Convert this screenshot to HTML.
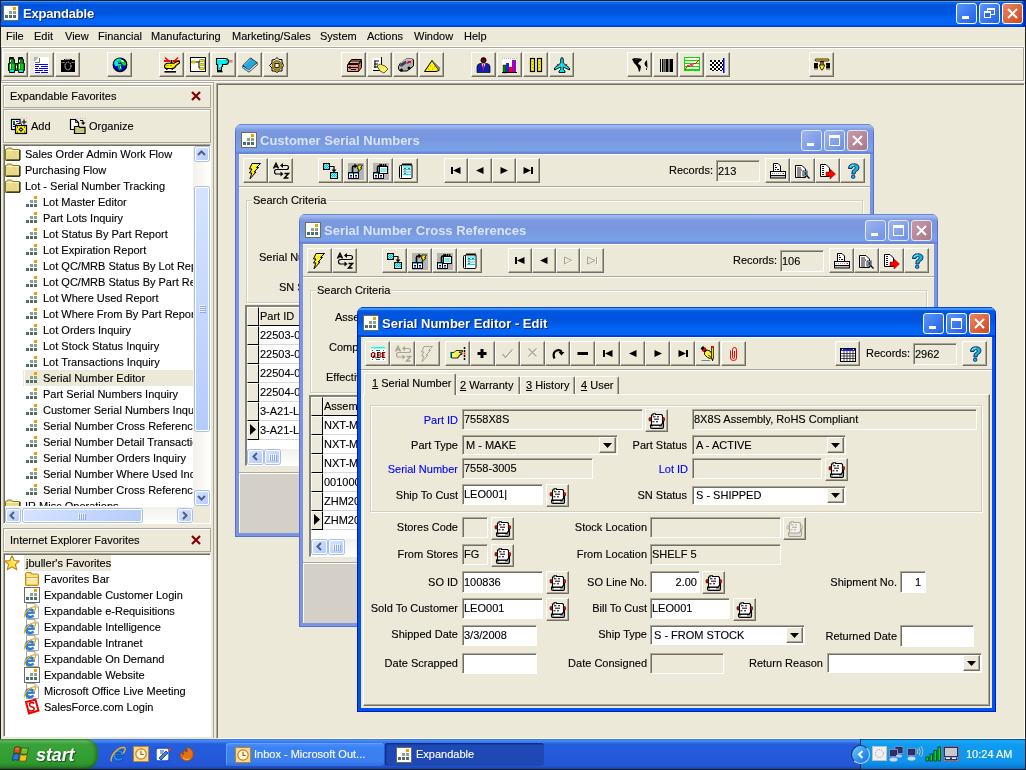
<!DOCTYPE html>
<html><head><meta charset="utf-8"><style>
*{margin:0;padding:0;box-sizing:border-box}
html,body{width:1026px;height:770px;overflow:hidden}
body{position:relative;background:#ECE9D8;will-change:transform;font-family:"Liberation Sans",sans-serif;font-size:11px;color:#000}
.a{position:absolute}
.t{position:absolute;white-space:nowrap;line-height:13px;font-size:11px;-webkit-text-stroke:0.12px currentColor}
.bl{color:#0000FF}
.tb{position:absolute;width:25px;height:25px;background:#ECE9D8;border-top:1px solid #fff;border-left:1px solid #fff;border-right:1px solid #716F64;border-bottom:1px solid #716F64;box-shadow:inset -1px -1px 0 #ACA899}
.tb svg{position:absolute;left:3px;top:3px;width:16px;height:16px}
.fld{position:absolute;background:#ECE9D8;border-top:1px solid #ACA899;border-left:1px solid #ACA899;border-right:1px solid #fff;border-bottom:1px solid #fff;box-shadow:inset 1px 1px 0 #716F64}
.fld.w{background:#fff}
.v{position:absolute;white-space:nowrap;line-height:13px;font-size:11px;-webkit-text-stroke:0.12px currentColor}
.ttl{position:absolute;white-space:nowrap;font-weight:bold;font-size:13px;line-height:16px}
.xb{position:absolute;width:21px;height:21px;border:1px solid #fff;border-radius:3px}
.sb{position:absolute;background:linear-gradient(135deg,#D6E4FF,#B4CBFA);border:1px solid #fff;border-radius:2px;box-shadow:0 0 0 1px #A8C0F0}
svg{overflow:visible}
</style></head><body>
<div class="a" style="left:0;top:0;width:1026px;height:1px;background:#202020"></div>
<div class="a" style="left:0;top:1px;width:1026px;height:26px;background:linear-gradient(to bottom,#3D93FF 0px,#3D93FF 1px,#0A66EE 1px,#0A62EA 3px,#0055DE 3px,#0055DE 13px,#005CE8 14px,#0064F4 18px,#0064F4 24px,#0050E0 24px,#0038CC 26px)"></div>
<div class="a" style="left:1021px;top:1px;width:5px;height:26px;background:linear-gradient(to right,rgba(0,40,190,0),#0030B8 70%,#001C90)"></div>
<svg class="a" style="left:3px;top:5px;width:16px;height:16px" viewBox="0 0 16 16"><rect x="0.5" y="0.5" width="15" height="15" fill="#fff" stroke="#6b6b5e"/><rect x="10" y="2" width="3" height="3" fill="#F0A000"/><rect x="6" y="6" width="3" height="3" fill="#8DA28D"/><rect x="10" y="6" width="3" height="3" fill="#8DA28D"/><rect x="2" y="10" width="3" height="3" fill="#4E6E6E"/><rect x="6" y="10" width="3" height="3" fill="#4E6E6E"/><rect x="10" y="10" width="3" height="3" fill="#4E6E6E"/></svg>
<div class="ttl" style="left:23px;top:6px;color:#fff;text-shadow:1px 1px 0 #0A1E6E;letter-spacing:-0.2px">Expandable</div>
<div class="xb" style="left:956px;top:3px;background:linear-gradient(135deg,#5A95FA,#2060E8);border-color:#fff"><div class="a" style="left:5px;top:12px;width:7px;height:3px;background:#fff"></div></div><div class="xb" style="left:979px;top:3px;background:linear-gradient(135deg,#5A95FA,#2060E8);border-color:#fff"><div class="a" style="left:7px;top:4px;width:8px;height:7px;border:1px solid #fff;border-top-width:2px"></div><div class="a" style="left:4px;top:7px;width:7px;height:7px;border:1px solid #fff;border-top-width:2px;background:#2A68EA"></div></div><div class="xb" style="left:1002px;top:3px;background:linear-gradient(135deg,#EC8660,#CC4820);border-color:#fff"><svg class="a" style="left:4px;top:4px;width:11px;height:11px"><path d="M1 1L10 10M10 1L1 10" stroke="#fff" stroke-width="2"/></svg></div>
<div class="a" style="left:0;top:0;width:1px;height:739px;background:#202020"></div>
<div class="a" style="left:1025px;top:27px;width:1px;height:712px;background:#202020"></div>
<div class="t " style="left:6px;top:30px;">File</div>
<div class="t " style="left:34px;top:30px;">Edit</div>
<div class="t " style="left:65px;top:30px;">View</div>
<div class="t " style="left:98px;top:30px;">Financial</div>
<div class="t " style="left:151px;top:30px;">Manufacturing</div>
<div class="t " style="left:232px;top:30px;">Marketing/Sales</div>
<div class="t " style="left:320px;top:30px;">System</div>
<div class="t " style="left:367px;top:30px;">Actions</div>
<div class="t " style="left:414px;top:30px;">Window</div>
<div class="t " style="left:464px;top:30px;">Help</div>
<div class="a" style="left:1px;top:46px;width:1024px;height:1px;background:#fff"></div>
<div class="a" style="left:1px;top:47px;width:1023px;height:34px;border:1px solid #ACA899;box-shadow:inset 1px 1px 0 #fff,1px 1px 0 #fff"></div>
<div class="tb" style="left:3px;top:52px;width:25px;height:25px"><svg style="left:4px;top:4px" viewBox="0 0 16 16"><path d="M1.5 0.5h4v2h1v4h1v7h-1v2h-5v-2h-1v-7h1z" fill="#0A8C0A" stroke="#000"/><path d="M10.5 0.5h4v2h1v4h1v7h-1v2h-5v-2h-1v-7h1z" fill="#0A8C0A" stroke="#000"/><rect x="2" y="1" width="3" height="1" fill="#000"/><rect x="11" y="1" width="3" height="1" fill="#000"/><rect x="2" y="3" width="1" height="2" fill="#fff"/><rect x="11" y="3" width="1" height="2" fill="#fff"/><rect x="2" y="7" width="1" height="5" fill="#fff"/><rect x="11" y="7" width="1" height="5" fill="#fff"/><rect x="4" y="7" width="2" height="5" fill="#00E000"/><rect x="13" y="7" width="2" height="5" fill="#00E000"/><rect x="2" y="13" width="4" height="2" fill="#00E8F0"/><rect x="11" y="13" width="4" height="2" fill="#00E8F0"/><path d="M7.5 6.5h2v7h-2z" fill="#00C000" stroke="#000"/><rect x="8" y="9" width="1" height="2" fill="#fff"/></svg></div>
<div class="tb" style="left:29px;top:52px;width:25px;height:25px"><svg style="left:4px;top:4px" viewBox="0 0 16 16"><path d="M0 0h15v16H0z" fill="#fff"/><path d="M0 0 H5 L0 5z" fill="#B0B0BC"/><path d="M5.5 1 V5.5 H1" fill="none" stroke="#707070"/><path d="M1 7.5h13M1 9.5h4M7 9.5h7M1 11.5h3M5 11.5h9M1 13.5h8M10 13.5h4M1 15.5h5M7 15.5h7" stroke="#0000FF" stroke-width="1"/></svg></div>
<div class="tb" style="left:55px;top:52px;width:25px;height:25px"><svg style="left:4px;top:4px" viewBox="0 0 16 16"><rect x="1" y="3" width="14" height="12" fill="#000"/><rect x="4" y="2" width="8" height="1.5" fill="#000"/><rect x="5" y="1.8" width="5" height="1" fill="#A0A0A0"/><ellipse cx="8" cy="9" rx="3" ry="3.8" fill="none" stroke="#E8E8E8" stroke-width="1" stroke-dasharray="1.5 0.7"/><path d="M2.5 5.5h2M11.5 5.5h2M0.5 5.5h1M14.5 5.5h1" stroke="#B0B0B0" stroke-width="0.8"/></svg></div>
<div class="tb" style="left:107px;top:52px;width:25px;height:25px"><svg style="left:4px;top:4px" viewBox="0 0 16 16"><circle cx="8" cy="7.8" r="6.8" fill="#0000E0" stroke="#000" stroke-width="1.2"/><path d="M2 6 Q3 2 7 1.5 L10 2 L8 4 L6 4 L6 7 L9 7 L9 12 L7 13 L6 9 L3 9z" fill="#00E8F0"/><path d="M5 4 L8 3 L11 3 L14 6 L14 8 L12 9 L10 7 L9 5 L7 6z" fill="#00E000"/><path d="M6 8 L9 8 L10 12 L7 13z" fill="#00C000"/><path d="M8 9 L9 10 L8 12z" fill="#fff"/><path d="M9 3h2l1 2h-2z" fill="#fff"/></svg></div>
<div class="tb" style="left:159px;top:52px;width:25px;height:25px"><svg style="left:4px;top:4px" viewBox="0 0 16 16"><path d="M0.8 0.5 L4 3.3 M14.2 0.5 L11 3.3" stroke="#FF0000" stroke-width="1.4"/><rect x="0" y="3" width="6" height="2" fill="#FF0000"/><rect x="9" y="3" width="6" height="2" fill="#FF0000"/><rect x="6.5" y="3" width="2" height="3" fill="#000"/><path d="M0.5 9.5 Q0.5 6.5 4 6.2 H10 Q11 5.5 12 5 L15.5 4 V6 L12 8.5 Q11 11.5 8 11.5 H3 Q0.5 11.5 0.5 9.5z" fill="#FFF000" stroke="#000" stroke-width="1.1"/><path d="M2.5 8.5h2M6 8.5h2" stroke="#909000" stroke-width="1"/><rect x="2" y="11.5" width="1.5" height="2" fill="#000"/><rect x="7.5" y="11.5" width="1.5" height="2" fill="#000"/><rect x="0" y="13" width="12" height="1" fill="#fff"/><rect x="0.5" y="14" width="11.5" height="1.6" fill="#000"/></svg></div>
<div class="tb" style="left:185px;top:52px;width:25px;height:25px"><svg style="left:4px;top:4px" viewBox="0 0 16 16"><rect x="0.5" y="0.5" width="15" height="14" fill="#fff" stroke="#000"/><path d="M1 0.5h14M1 14.5h14" stroke="#000"/><path d="M6 5h3M9 5 L10 3.5M9 5v6h1" fill="none" stroke="#000"/><path d="M9.5 3h5v9h-5" fill="none" stroke="#8890A0"/><rect x="1" y="4" width="5" height="2" rx="1" fill="#F0E000" stroke="#707000" stroke-width="0.5"/><rect x="9.5" y="2.5" width="5" height="2" rx="1" fill="#F0E000" stroke="#707000" stroke-width="0.5"/><rect x="9.5" y="6.5" width="5" height="2" rx="1" fill="#F0E000" stroke="#707000" stroke-width="0.5"/><rect x="9.5" y="10.5" width="5" height="2" rx="1" fill="#F0E000" stroke="#707000" stroke-width="0.5"/></svg></div>
<div class="tb" style="left:211px;top:52px;width:25px;height:25px"><svg style="left:4px;top:4px" viewBox="0 0 16 16"><path d="M0.5 1.5 H9.5 Q12.5 1.5 12.5 4.5 Q12.5 7.5 9.5 7.5 H6.5 V9.5 H5.5 V13.5 H1.5 V7.5 H0.5z" fill="#00F0F0" stroke="#000" stroke-width="1.1"/><path d="M1.5 2.5h8" stroke="#A0FFFF"/><rect x="3" y="8.3" width="2.5" height="1.5" fill="#fff"/><path d="M10 3 l1 1 M3 11 l1 1" stroke="#00A0A0" stroke-width="0.8"/><path d="M12.5 4 h4" stroke="#FF0000" stroke-width="1"/><path d="M12.5 5.2 h4" stroke="#A0A0A0" stroke-width="0.8"/><rect x="1" y="14" width="5.5" height="1.3" fill="#000"/></svg></div>
<div class="tb" style="left:237px;top:52px;width:25px;height:25px"><svg style="left:4px;top:4px" viewBox="0 0 16 16"><path d="M0.5 8.5 L8.5 0.5 L15.5 5.5 L15.5 8 L7 15.5 L0.5 11z" fill="#000"/><path d="M1.3 8.5 L8.5 1.3 L14.7 5.6 L6.8 13z" fill="#24A8DC"/><path d="M2 8.3 L8.5 2" stroke="#90E0FF" stroke-width="0.8"/><path d="M1 9.5 L6.8 13.3 L15 6.2 V7.8 L7 14.7 L1 10.6z" fill="#fff"/><path d="M1.5 10.3 L7 14 L14.8 7" fill="none" stroke="#A8A8A8" stroke-width="0.6"/><path d="M0.8 11 L6.9 15" stroke="#24A8DC" stroke-width="0.9"/></svg></div>
<div class="tb" style="left:263px;top:52px;width:25px;height:25px"><svg style="left:4px;top:4px" viewBox="0 0 16 16"><path d="M9 0.5 L11 2.5 L14 2.5 L14 5 L15.5 8.5 L14 11 L14 14 L11 14 L9 15.5 L7 14 L4 14 L4 11 L1.5 8.5 L4 6 L4 3 L7 2.5z" fill="none" stroke="#000" stroke-width="1"/><circle cx="9" cy="8.5" r="4.8" fill="#B89A10" stroke="#806000"/><rect x="7" y="6.5" width="4" height="4" fill="#fff" stroke="#000" stroke-width="0.8"/></svg></div>
<div class="tb" style="left:341px;top:52px;width:25px;height:25px"><svg style="left:4px;top:4px" viewBox="0 0 16 16"><path d="M2.5 6.5 L5.5 2.5 H15.5 L12.5 6.5z" fill="#F0A090" stroke="#000"/><path d="M2.5 6.5 L4.5 4 H14.5" fill="none" stroke="#000"/><path d="M1.5 7.5 H12.5 V14.5 H1.5z" fill="#F09080" stroke="#000"/><path d="M12.5 7.5 L15.5 3.5 V10.5 L12.5 14.5" fill="#C06050" stroke="#000"/><path d="M2 10.5h10M4 9v3M5 12.5h5" stroke="#000"/></svg></div>
<div class="tb" style="left:367px;top:52px;width:25px;height:25px"><svg style="left:4px;top:4px" viewBox="0 0 16 16"><rect x="0" y="1" width="10" height="13" fill="#fff"/><path d="M2 4h5M2 7h4M2 10h4M3 4v7M1 13.5h8" stroke="#000" stroke-width="1"/><path d="M9.5 0v12" stroke="#000"/><path d="M5 9 L8 7 L13 9 L16 12 L12 16 L8 14 z" fill="#F8F040" stroke="#000" stroke-width="0.6"/><path d="M9 10l2 2M11 10l2 2M10 13l2 1" stroke="#fff" stroke-width="0.8"/></svg></div>
<div class="tb" style="left:393px;top:52px;width:25px;height:25px"><svg style="left:4px;top:4px" viewBox="0 0 16 16"><path d="M0.5 9.5 L2.5 6 L9 1.5 H14 L15.5 3 V9 L9 14 H2 L0.5 12z" fill="#B0B0B0" stroke="#000"/><path d="M2.5 6 L9 2 L14 2" fill="none" stroke="#E8E8E8"/><path d="M1.5 9 L3.5 6 L8 3.5 L8 6.5 L4 9.5z" fill="#404040"/><rect x="10" y="4" width="3" height="2" fill="#FF0000"/><rect x="8.5" y="5" width="2" height="2" fill="#8040C0"/><circle cx="3.5" cy="13" r="1.5" fill="#000"/><circle cx="11" cy="11" r="1.5" fill="#000"/></svg></div>
<div class="tb" style="left:419px;top:52px;width:25px;height:25px"><svg style="left:4px;top:4px" viewBox="0 0 16 16"><path d="M0.5 14.5 L8 3.5 L12 9.5 L15 13.5 L12 14.5z" fill="#FFF000" stroke="#000"/><path d="M8 3.5 L16 11 L15 13.5z" fill="#909090" stroke="#505050" stroke-width="0.6"/><path d="M6 9h.8M4 12h.8M8 12h.8M10 10h.8" stroke="#707000" stroke-width="0.8"/></svg></div>
<div class="tb" style="left:471px;top:52px;width:25px;height:25px"><svg style="left:4px;top:4px" viewBox="0 0 16 16"><circle cx="7.5" cy="3.2" r="2.6" fill="#300000" stroke="#000" stroke-width="0.7"/><rect x="6" y="2" width="3" height="3" fill="#800000"/><path d="M1 15.5 V10 Q1 7 4 6.5 H11 Q14 7 14 10 V15.5z" fill="#1020B0" stroke="#000" stroke-width="0.7"/><path d="M5.5 6.5 L7.5 12 L9.5 6.5z" fill="#fff"/><path d="M7.5 7v6" stroke="#E00060" stroke-width="1.3"/></svg></div>
<div class="tb" style="left:497px;top:52px;width:25px;height:25px"><svg style="left:4px;top:4px" viewBox="0 0 16 16"><rect x="0" y="1" width="15" height="15" fill="#fff"/><path d="M0 1.5h15" stroke="#B0B0B0" stroke-dasharray="1 1"/><rect x="1" y="8" width="3" height="8" fill="#008000" stroke="#000" stroke-width="0.4"/><rect x="4" y="6" width="3" height="10" fill="#2020F0"/><rect x="7" y="10" width="3" height="6" fill="#FF0000"/><rect x="10" y="3" width="4" height="13" fill="#A000C0"/><path d="M0 15.5h15" stroke="#000"/></svg></div>
<div class="tb" style="left:523px;top:52px;width:25px;height:25px"><svg style="left:4px;top:4px" viewBox="0 0 16 16"><rect x="2.5" y="1.5" width="4" height="13" fill="#FFF000" stroke="#000" stroke-width="1.2"/><rect x="9.5" y="1.5" width="4" height="13" fill="#FFF000" stroke="#000" stroke-width="1.2"/><path d="M4.5 4v.8M4.5 7v.8M4.5 10v.8M11.5 4v.8M11.5 7v.8M11.5 10v.8" stroke="#A0A000"/></svg></div>
<div class="tb" style="left:549px;top:52px;width:25px;height:25px"><svg style="left:4px;top:4px" viewBox="0 0 16 16"><path d="M8 0.5 Q9.3 0.5 9.3 3 V6 L15.5 11 V13 L9.3 10 V12.5 L11 14 V15.5 H5 V14 L6.7 12.5 V10 L0.5 13 V11 L6.7 6 V3 Q6.7 0.5 8 0.5z" fill="#00E8F0" stroke="#000" stroke-width="0.9"/><path d="M3 7.5 L4.5 8.5 M13 7.5 L11.5 8.5" stroke="#E00000" stroke-width="1.6"/></svg></div>
<div class="tb" style="left:627px;top:52px;width:25px;height:25px"><svg style="left:4px;top:4px" viewBox="0 0 16 16"><path d="M0 2 L3 1 L8 1.5 L10 2 L9 4 L7 5 L6 7 L8 8 L9 10 L8 14 L7 15 L6 11 L4 8 L2 6 L1 4z" fill="#000"/><path d="M3 1 L5 2 L4 3z" fill="#606060"/><path d="M13 5 L15 3 L15.5 11 L13.5 9 L12.5 7z" fill="#000"/><path d="M14 11h1v2h-1z" fill="#203060"/></svg></div>
<div class="tb" style="left:653px;top:52px;width:25px;height:25px"><svg style="left:4px;top:4px" viewBox="0 0 16 16"><path d="M2.5 2v13M4.5 2v13M7 2v13M11 2v13" stroke="#000" stroke-width="1"/><rect x="8" y="2" width="2" height="13" fill="#000"/><rect x="12" y="2" width="3" height="13" fill="#000"/><rect x="5.5" y="2" width="0.8" height="13" fill="#000"/></svg></div>
<div class="tb" style="left:679px;top:52px;width:25px;height:25px"><svg style="left:4px;top:4px" viewBox="0 0 16 16"><rect x="0.5" y="0.5" width="15" height="13" fill="#FFF8F0" stroke="#00E000"/><path d="M1 3.5h14M1 6.5h14M1 9.5h14M1 12.5h14" stroke="#00E000"/><path d="M1 13 L4 8 L5 10 L7 7 L8 9 L10 6 L11 7 L15 3" fill="none" stroke="#FF0000" stroke-width="1"/></svg></div>
<div class="tb" style="left:705px;top:52px;width:25px;height:25px"><svg style="left:4px;top:4px" viewBox="0 0 16 16"><rect x="0" y="3" width="13" height="11" fill="#fff"/><path d="M0 3h2v2H0zM4 3h2v2H4zM8 3h2v2H8zM12 3h1v2h-1zM2 5h2v2H2zM6 5h2v2H6zM10 5h2v2h-2zM0 7h2v2H0zM4 7h2v2H4zM8 7h2v2H8zM12 7h1v2h-1zM2 9h2v2H2zM6 9h2v2H6zM10 9h2v2h-2zM0 11h2v2H0zM4 11h2v2H4zM8 11h2v2H8zM12 11h1v2h-1zM2 13h2v1H2zM6 13h2v1H6zM10 13h2v1h-2z" fill="#000"/><rect x="13" y="1" width="1.5" height="15" fill="#0000FF"/></svg></div>
<div class="tb" style="left:809px;top:52px;width:25px;height:25px"><svg style="left:4px;top:4px" viewBox="0 0 16 16"><rect x="1" y="2" width="14" height="2" rx="1" fill="#FFF000" stroke="#000" stroke-width="0.8"/><path d="M6 4 L7 6 H9 L10 4" fill="#000"/><path d="M6.5 5.5 Q8 4.5 9.5 5.5 V8 H6.5z" fill="#fff" stroke="#000" stroke-width="0.7"/><rect x="7" y="5.5" width="2" height="1.3" fill="#FF0000"/><rect x="0" y="6" width="4" height="5.5" fill="#000"/><rect x="12" y="6" width="4" height="5.5" fill="#000"/><path d="M4 7h2M10 7h2M4 10h2M10 10h2" stroke="#fff" stroke-width="0.8"/><path d="M5 8 H11 L8.5 13 H7.5z" fill="#FFF000" stroke="#000" stroke-width="0.8"/><circle cx="4.3" cy="8.5" r="0.8" fill="#FFF000"/><circle cx="11.7" cy="8.5" r="0.8" fill="#FFF000"/><rect x="0" y="12" width="4" height="1" fill="#A0A0A0"/><rect x="12" y="12" width="4" height="1" fill="#A0A0A0"/></svg></div>
<div class="a" style="left:1px;top:82px;width:213px;height:1px;background:#ACA899"></div>
<div class="a" style="left:1px;top:83px;width:213px;height:1px;background:#fff"></div>
<div class="a" style="left:213px;top:83px;width:1px;height:655px;background:#ACA899"></div>
<div class="a" style="left:3px;top:85px;width:208px;height:23px;border:1px solid #ACA899;box-shadow:inset 1px 1px 0 #fff"></div>
<div class="t " style="left:10px;top:90px;">Expandable Favorites</div>
<svg class="a" style="left:191px;top:91px;width:10px;height:10px" viewBox="0 0 10 10"><path d="M1 1 L9 9 M9 1 L1 9" stroke="#800000" stroke-width="2.2"/></svg>
<div class="a" style="left:3px;top:109px;width:208px;height:34px;border:1px solid #ACA899;box-shadow:inset 1px 1px 0 #fff"></div>
<svg class="a" style="left:11px;top:118px;width:16px;height:16px" viewBox="0 0 16 16"><path d="M0 0.3h16" stroke="#B8A0B8" stroke-dasharray="1 1.5" stroke-width="0.7"/><rect x="0.5" y="1.5" width="8.5" height="10" fill="#fff" stroke="#000" stroke-width="1.2"/><rect x="2" y="3" width="2" height="3" fill="#008000"/><path d="M5 3.5h2.5M2 6.5h2.5M2 8.5h2.5" stroke="#0000FF" stroke-width="1"/><path d="M13 1.5v5M10.5 4h5" stroke="#000" stroke-width="1.1"/><path d="M5.5 6.5 Q5.5 5.5 6.5 5.5 H9.5 Q10.5 5.5 10.5 6.5 V7" fill="#fff" stroke="#000" stroke-width="1"/><rect x="4.5" y="7.5" width="11" height="8" fill="#F8F000" stroke="#000" stroke-width="1.2"/><path d="M10 9 L12.5 11.5 L10 14 L7.5 11.5z" fill="#000080"/><circle cx="10" cy="11.5" r="0.8" fill="#fff"/><path d="M6 9h1M13 9h1M6 14h1M13 14h1" stroke="#000080"/></svg>
<div class="t " style="left:31px;top:120px;">Add</div>
<svg class="a" style="left:70px;top:118px;width:16px;height:16px" viewBox="0 0 16 16"><path d="M0 0.3h16" stroke="#B8A0B8" stroke-dasharray="1 1.5" stroke-width="0.7"/><path d="M0.5 1.5 H5.5 L8.5 4.5 V11.5 H0.5z" fill="#fff" stroke="#000" stroke-width="1.2"/><path d="M5.5 1.5 V4.5 H8.5" fill="none" stroke="#000" stroke-width="0.8"/><path d="M10 2.5 H13 V5" fill="none" stroke="#000" stroke-width="1"/><path d="M11 4.5 H15.5 L13.2 7z" fill="#000"/><path d="M4.5 8.5 H9 L9.8 9.3 H15 V15.5 H4.5z" fill="#C8C480" stroke="#000" stroke-width="1.2"/></svg>
<div class="t " style="left:89px;top:120px;">Organize</div>
<div class="a" style="left:3px;top:144px;width:208px;height:380px;background:#fff;border-top:1px solid #ACA899;border-left:1px solid #ACA899;border-right:1px solid #fff;border-bottom:1px solid #fff;box-shadow:inset 1px 1px 0 #716F64"></div>
<div class="a" style="left:5px;top:146px;width:188px;height:360px;overflow:hidden">
<svg class="a" style="left:0px;top:1px;width:16px;height:16px" viewBox="0 0 16 16"><path d="M1.5 2.5 L2.5 1 H6.5 L7.5 2.5 H14.5 V13.5 H0.5 V2.5z" fill="#E8DC88" stroke="#8A7A20" stroke-width="1"/><path d="M1 3.5 H14" stroke="#F8F0C0"/><path d="M1.5 13 H15 V3" fill="none" stroke="#000" stroke-width="1"/><path d="M3 11 L6 8 M7 11 L11 7 M9 6 l2 -1" stroke="#F0B080" stroke-width="0.8" stroke-dasharray="1 1"/></svg>
<div class="t " style="left:20px;top:2px;">Sales Order Admin Work Flow</div>
<svg class="a" style="left:0px;top:17px;width:16px;height:16px" viewBox="0 0 16 16"><path d="M1.5 2.5 L2.5 1 H6.5 L7.5 2.5 H14.5 V13.5 H0.5 V2.5z" fill="#E8DC88" stroke="#8A7A20" stroke-width="1"/><path d="M1 3.5 H14" stroke="#F8F0C0"/><path d="M1.5 13 H15 V3" fill="none" stroke="#000" stroke-width="1"/><path d="M3 11 L6 8 M7 11 L11 7 M9 6 l2 -1" stroke="#F0B080" stroke-width="0.8" stroke-dasharray="1 1"/></svg>
<div class="t " style="left:20px;top:18px;">Purchasing Flow</div>
<svg class="a" style="left:0px;top:33px;width:16px;height:16px" viewBox="0 0 16 16"><path d="M1.5 2.5 L2.5 1 H6.5 L7.5 2.5 H14.5 V13.5 H0.5 V2.5z" fill="#E8DC88" stroke="#8A7A20" stroke-width="1"/><path d="M1 3.5 H14" stroke="#F8F0C0"/><path d="M1.5 13 H15 V3" fill="none" stroke="#000" stroke-width="1"/><path d="M3 11 L6 8 M7 11 L11 7 M9 6 l2 -1" stroke="#F0B080" stroke-width="0.8" stroke-dasharray="1 1"/></svg>
<div class="t " style="left:20px;top:34px;">Lot - Serial Number Tracking</div>
<svg class="a" style="left:19px;top:49px;width:16px;height:16px" viewBox="0 0 16 16"><rect x="10" y="1" width="3" height="3" fill="#F0A000"/><rect x="6" y="5" width="3" height="3" fill="#8DA28D"/><rect x="10" y="5" width="3" height="3" fill="#8DA28D"/><rect x="2" y="9" width="3" height="3" fill="#4E6E6E"/><rect x="6" y="9" width="3" height="3" fill="#4E6E6E"/><rect x="10" y="9" width="3" height="3" fill="#4E6E6E"/></svg>
<div class="t " style="left:38px;top:50px;">Lot Master Editor</div>
<svg class="a" style="left:19px;top:65px;width:16px;height:16px" viewBox="0 0 16 16"><rect x="10" y="1" width="3" height="3" fill="#F0A000"/><rect x="6" y="5" width="3" height="3" fill="#8DA28D"/><rect x="10" y="5" width="3" height="3" fill="#8DA28D"/><rect x="2" y="9" width="3" height="3" fill="#4E6E6E"/><rect x="6" y="9" width="3" height="3" fill="#4E6E6E"/><rect x="10" y="9" width="3" height="3" fill="#4E6E6E"/></svg>
<div class="t " style="left:38px;top:66px;">Part Lots Inquiry</div>
<svg class="a" style="left:19px;top:81px;width:16px;height:16px" viewBox="0 0 16 16"><rect x="10" y="1" width="3" height="3" fill="#F0A000"/><rect x="6" y="5" width="3" height="3" fill="#8DA28D"/><rect x="10" y="5" width="3" height="3" fill="#8DA28D"/><rect x="2" y="9" width="3" height="3" fill="#4E6E6E"/><rect x="6" y="9" width="3" height="3" fill="#4E6E6E"/><rect x="10" y="9" width="3" height="3" fill="#4E6E6E"/></svg>
<div class="t " style="left:38px;top:82px;">Lot Status By Part Report</div>
<svg class="a" style="left:19px;top:97px;width:16px;height:16px" viewBox="0 0 16 16"><rect x="10" y="1" width="3" height="3" fill="#F0A000"/><rect x="6" y="5" width="3" height="3" fill="#8DA28D"/><rect x="10" y="5" width="3" height="3" fill="#8DA28D"/><rect x="2" y="9" width="3" height="3" fill="#4E6E6E"/><rect x="6" y="9" width="3" height="3" fill="#4E6E6E"/><rect x="10" y="9" width="3" height="3" fill="#4E6E6E"/></svg>
<div class="t " style="left:38px;top:98px;">Lot Expiration Report</div>
<svg class="a" style="left:19px;top:113px;width:16px;height:16px" viewBox="0 0 16 16"><rect x="10" y="1" width="3" height="3" fill="#F0A000"/><rect x="6" y="5" width="3" height="3" fill="#8DA28D"/><rect x="10" y="5" width="3" height="3" fill="#8DA28D"/><rect x="2" y="9" width="3" height="3" fill="#4E6E6E"/><rect x="6" y="9" width="3" height="3" fill="#4E6E6E"/><rect x="10" y="9" width="3" height="3" fill="#4E6E6E"/></svg>
<div class="t " style="left:38px;top:114px;">Lot QC/MRB Status By Lot Report</div>
<svg class="a" style="left:19px;top:129px;width:16px;height:16px" viewBox="0 0 16 16"><rect x="10" y="1" width="3" height="3" fill="#F0A000"/><rect x="6" y="5" width="3" height="3" fill="#8DA28D"/><rect x="10" y="5" width="3" height="3" fill="#8DA28D"/><rect x="2" y="9" width="3" height="3" fill="#4E6E6E"/><rect x="6" y="9" width="3" height="3" fill="#4E6E6E"/><rect x="10" y="9" width="3" height="3" fill="#4E6E6E"/></svg>
<div class="t " style="left:38px;top:130px;">Lot QC/MRB Status By Part Report</div>
<svg class="a" style="left:19px;top:145px;width:16px;height:16px" viewBox="0 0 16 16"><rect x="10" y="1" width="3" height="3" fill="#F0A000"/><rect x="6" y="5" width="3" height="3" fill="#8DA28D"/><rect x="10" y="5" width="3" height="3" fill="#8DA28D"/><rect x="2" y="9" width="3" height="3" fill="#4E6E6E"/><rect x="6" y="9" width="3" height="3" fill="#4E6E6E"/><rect x="10" y="9" width="3" height="3" fill="#4E6E6E"/></svg>
<div class="t " style="left:38px;top:146px;">Lot Where Used Report</div>
<svg class="a" style="left:19px;top:161px;width:16px;height:16px" viewBox="0 0 16 16"><rect x="10" y="1" width="3" height="3" fill="#F0A000"/><rect x="6" y="5" width="3" height="3" fill="#8DA28D"/><rect x="10" y="5" width="3" height="3" fill="#8DA28D"/><rect x="2" y="9" width="3" height="3" fill="#4E6E6E"/><rect x="6" y="9" width="3" height="3" fill="#4E6E6E"/><rect x="10" y="9" width="3" height="3" fill="#4E6E6E"/></svg>
<div class="t " style="left:38px;top:162px;">Lot Where From By Part Report</div>
<svg class="a" style="left:19px;top:177px;width:16px;height:16px" viewBox="0 0 16 16"><rect x="10" y="1" width="3" height="3" fill="#F0A000"/><rect x="6" y="5" width="3" height="3" fill="#8DA28D"/><rect x="10" y="5" width="3" height="3" fill="#8DA28D"/><rect x="2" y="9" width="3" height="3" fill="#4E6E6E"/><rect x="6" y="9" width="3" height="3" fill="#4E6E6E"/><rect x="10" y="9" width="3" height="3" fill="#4E6E6E"/></svg>
<div class="t " style="left:38px;top:178px;">Lot Orders Inquiry</div>
<svg class="a" style="left:19px;top:193px;width:16px;height:16px" viewBox="0 0 16 16"><rect x="10" y="1" width="3" height="3" fill="#F0A000"/><rect x="6" y="5" width="3" height="3" fill="#8DA28D"/><rect x="10" y="5" width="3" height="3" fill="#8DA28D"/><rect x="2" y="9" width="3" height="3" fill="#4E6E6E"/><rect x="6" y="9" width="3" height="3" fill="#4E6E6E"/><rect x="10" y="9" width="3" height="3" fill="#4E6E6E"/></svg>
<div class="t " style="left:38px;top:194px;">Lot Stock Status Inquiry</div>
<svg class="a" style="left:19px;top:209px;width:16px;height:16px" viewBox="0 0 16 16"><rect x="10" y="1" width="3" height="3" fill="#F0A000"/><rect x="6" y="5" width="3" height="3" fill="#8DA28D"/><rect x="10" y="5" width="3" height="3" fill="#8DA28D"/><rect x="2" y="9" width="3" height="3" fill="#4E6E6E"/><rect x="6" y="9" width="3" height="3" fill="#4E6E6E"/><rect x="10" y="9" width="3" height="3" fill="#4E6E6E"/></svg>
<div class="t " style="left:38px;top:210px;">Lot Transactions Inquiry</div>
<div class="a" style="left:18px;top:224px;width:170px;height:16px;background:#ECE9D8"></div>
<div class="a" style="left:19px;top:224px;width:1px;height:16px;background:#fff"></div>
<svg class="a" style="left:19px;top:225px;width:16px;height:16px" viewBox="0 0 16 16"><rect x="10" y="1" width="3" height="3" fill="#F0A000"/><rect x="6" y="5" width="3" height="3" fill="#8DA28D"/><rect x="10" y="5" width="3" height="3" fill="#8DA28D"/><rect x="2" y="9" width="3" height="3" fill="#4E6E6E"/><rect x="6" y="9" width="3" height="3" fill="#4E6E6E"/><rect x="10" y="9" width="3" height="3" fill="#4E6E6E"/></svg>
<div class="t " style="left:38px;top:226px;">Serial Number Editor</div>
<svg class="a" style="left:19px;top:241px;width:16px;height:16px" viewBox="0 0 16 16"><rect x="10" y="1" width="3" height="3" fill="#F0A000"/><rect x="6" y="5" width="3" height="3" fill="#8DA28D"/><rect x="10" y="5" width="3" height="3" fill="#8DA28D"/><rect x="2" y="9" width="3" height="3" fill="#4E6E6E"/><rect x="6" y="9" width="3" height="3" fill="#4E6E6E"/><rect x="10" y="9" width="3" height="3" fill="#4E6E6E"/></svg>
<div class="t " style="left:38px;top:242px;">Part Serial Numbers Inquiry</div>
<svg class="a" style="left:19px;top:257px;width:16px;height:16px" viewBox="0 0 16 16"><rect x="10" y="1" width="3" height="3" fill="#F0A000"/><rect x="6" y="5" width="3" height="3" fill="#8DA28D"/><rect x="10" y="5" width="3" height="3" fill="#8DA28D"/><rect x="2" y="9" width="3" height="3" fill="#4E6E6E"/><rect x="6" y="9" width="3" height="3" fill="#4E6E6E"/><rect x="10" y="9" width="3" height="3" fill="#4E6E6E"/></svg>
<div class="t " style="left:38px;top:258px;">Customer Serial Numbers Inquiry</div>
<svg class="a" style="left:19px;top:273px;width:16px;height:16px" viewBox="0 0 16 16"><rect x="10" y="1" width="3" height="3" fill="#F0A000"/><rect x="6" y="5" width="3" height="3" fill="#8DA28D"/><rect x="10" y="5" width="3" height="3" fill="#8DA28D"/><rect x="2" y="9" width="3" height="3" fill="#4E6E6E"/><rect x="6" y="9" width="3" height="3" fill="#4E6E6E"/><rect x="10" y="9" width="3" height="3" fill="#4E6E6E"/></svg>
<div class="t " style="left:38px;top:274px;">Serial Number Cross Reference</div>
<svg class="a" style="left:19px;top:289px;width:16px;height:16px" viewBox="0 0 16 16"><rect x="10" y="1" width="3" height="3" fill="#F0A000"/><rect x="6" y="5" width="3" height="3" fill="#8DA28D"/><rect x="10" y="5" width="3" height="3" fill="#8DA28D"/><rect x="2" y="9" width="3" height="3" fill="#4E6E6E"/><rect x="6" y="9" width="3" height="3" fill="#4E6E6E"/><rect x="10" y="9" width="3" height="3" fill="#4E6E6E"/></svg>
<div class="t " style="left:38px;top:290px;">Serial Number Detail Transaction</div>
<svg class="a" style="left:19px;top:305px;width:16px;height:16px" viewBox="0 0 16 16"><rect x="10" y="1" width="3" height="3" fill="#F0A000"/><rect x="6" y="5" width="3" height="3" fill="#8DA28D"/><rect x="10" y="5" width="3" height="3" fill="#8DA28D"/><rect x="2" y="9" width="3" height="3" fill="#4E6E6E"/><rect x="6" y="9" width="3" height="3" fill="#4E6E6E"/><rect x="10" y="9" width="3" height="3" fill="#4E6E6E"/></svg>
<div class="t " style="left:38px;top:306px;">Serial Number Orders Inquiry</div>
<svg class="a" style="left:19px;top:321px;width:16px;height:16px" viewBox="0 0 16 16"><rect x="10" y="1" width="3" height="3" fill="#F0A000"/><rect x="6" y="5" width="3" height="3" fill="#8DA28D"/><rect x="10" y="5" width="3" height="3" fill="#8DA28D"/><rect x="2" y="9" width="3" height="3" fill="#4E6E6E"/><rect x="6" y="9" width="3" height="3" fill="#4E6E6E"/><rect x="10" y="9" width="3" height="3" fill="#4E6E6E"/></svg>
<div class="t " style="left:38px;top:322px;">Serial Number Where Used Inquiry</div>
<svg class="a" style="left:19px;top:337px;width:16px;height:16px" viewBox="0 0 16 16"><rect x="10" y="1" width="3" height="3" fill="#F0A000"/><rect x="6" y="5" width="3" height="3" fill="#8DA28D"/><rect x="10" y="5" width="3" height="3" fill="#8DA28D"/><rect x="2" y="9" width="3" height="3" fill="#4E6E6E"/><rect x="6" y="9" width="3" height="3" fill="#4E6E6E"/><rect x="10" y="9" width="3" height="3" fill="#4E6E6E"/></svg>
<div class="t " style="left:38px;top:338px;">Serial Number Cross Reference</div>
<svg class="a" style="left:0px;top:353px;width:16px;height:16px" viewBox="0 0 16 16"><path d="M1.5 2.5 L2.5 1 H6.5 L7.5 2.5 H14.5 V13.5 H0.5 V2.5z" fill="#E8DC88" stroke="#8A7A20" stroke-width="1"/><path d="M1 3.5 H14" stroke="#F8F0C0"/><path d="M1.5 13 H15 V3" fill="none" stroke="#000" stroke-width="1"/><path d="M3 11 L6 8 M7 11 L11 7 M9 6 l2 -1" stroke="#F0B080" stroke-width="0.8" stroke-dasharray="1 1"/></svg>
<div class="t " style="left:20px;top:354px;">IR Misc Operations</div>
</div>
<div class="a" style="left:193px;top:146px;width:17px;height:360px;background:linear-gradient(to right,#F3F1EC,#FEFEFB)"></div>
<div class="sb" style="left:195px;top:147px;width:14px;height:14px"><svg class="a" style="left:1px;top:1px;width:9px;height:9px" viewBox="0 0 9 9"><path d="M1 6 L4.5 2.5 L8 6" fill="none" stroke="#4D6185" stroke-width="2"/></svg></div>
<div class="sb" style="left:195px;top:491px;width:14px;height:14px"><svg class="a" style="left:1px;top:1px;width:9px;height:9px" viewBox="0 0 9 9"><path d="M1 3 L4.5 6.5 L8 3" fill="none" stroke="#4D6185" stroke-width="2"/></svg></div>
<div class="sb" style="left:195px;top:187px;width:14px;height:244px"><svg class="a" style="left:2px;top:117px;width:8px;height:8px"><path d="M1 0.5h6M1 2.5h6M1 4.5h6M1 6.5h6" stroke="#EEF4FF"/><path d="M2 1.5h6M2 3.5h6M2 5.5h6M2 7.5h6" stroke="#8CA8E8"/></svg></div>
<div class="a" style="left:5px;top:507px;width:188px;height:16px;background:linear-gradient(to bottom,#F3F1EC,#FEFEFB)"></div>
<div class="sb" style="left:6px;top:509px;width:14px;height:13px"><svg class="a" style="left:1px;top:1px;width:9px;height:9px" viewBox="0 0 9 9"><path d="M6 1 L2.5 4.5 L6 8" fill="none" stroke="#4D6185" stroke-width="2"/></svg></div>
<div class="sb" style="left:178px;top:509px;width:14px;height:13px"><svg class="a" style="left:1px;top:1px;width:9px;height:9px" viewBox="0 0 9 9"><path d="M3 1 L6.5 4.5 L3 8" fill="none" stroke="#4D6185" stroke-width="2"/></svg></div>
<div class="sb" style="left:23px;top:509px;width:119px;height:13px"><svg class="a" style="left:54px;top:2px;width:8px;height:8px"><path d="M0.5 1v6M2.5 1v6M4.5 1v6M6.5 1v6" stroke="#EEF4FF"/><path d="M1.5 2v6M3.5 2v6M5.5 2v6M7.5 2v6" stroke="#8CA8E8"/></svg></div>
<div class="a" style="left:193px;top:506px;width:17px;height:17px;background:#ECE9D8"></div>
<div class="a" style="left:3px;top:528px;width:208px;height:24px;border:1px solid #ACA899;box-shadow:inset 1px 1px 0 #fff"></div>
<div class="t " style="left:10px;top:534px;">Internet Explorer Favorites</div>
<svg class="a" style="left:191px;top:535px;width:10px;height:10px" viewBox="0 0 10 10"><path d="M1 1 L9 9 M9 1 L1 9" stroke="#800000" stroke-width="2.2"/></svg>
<div class="a" style="left:3px;top:553px;width:208px;height:184px;background:#fff;border-top:1px solid #ACA899;border-left:1px solid #ACA899;border-right:1px solid #fff;border-bottom:1px solid #fff;box-shadow:inset 1px 1px 0 #716F64"></div>
<div class="a" style="left:24px;top:555px;width:87px;height:16px;background:#ECE9D8"></div>
<svg class="a" style="left:4px;top:555px;width:16px;height:16px" viewBox="0 0 16 16"><path d="M8 0.8 L10.2 5.6 L15.3 6 L11.4 9.4 L12.8 14.8 L8 11.9 L3.2 14.8 L4.6 9.4 L0.7 6 L5.8 5.6z" fill="#F8E040" stroke="#C08020" stroke-width="1.1" stroke-linejoin="round"/><path d="M8 3 L9 6.5 L12 7 L9.5 9" fill="none" stroke="#FFF8C0" stroke-width="0.8"/></svg>
<div class="t " style="left:26px;top:557px;">jbuller's Favorites</div>
<svg class="a" style="left:24px;top:571px;width:16px;height:16px" viewBox="0 0 16 16"><path d="M1.5 3.5 Q1.5 1.5 3.5 1.5 H6.5 L8 3 H13 Q14.5 3 14.5 4.5 V12.5 Q14.5 14.5 12.5 14.5 H3 Q1.5 14.5 1.5 13z" fill="#F8E088" stroke="#C08818" stroke-width="1.1"/><path d="M2 6.5 H14 V13 Q14 14 13 14 H3 Q2 14 2 13z" fill="#FCEB9C" stroke="#D09820" stroke-width="0.8"/><path d="M3 7.5 H13" stroke="#fff" stroke-width="0.8"/></svg>
<div class="t " style="left:44px;top:573px;">Favorites Bar</div>
<svg class="a" style="left:24px;top:587px;width:16px;height:16px" viewBox="0 0 16 16"><rect x="0.5" y="0.5" width="15" height="15" fill="#fff" stroke="#6b6b5e"/><rect x="10" y="2" width="3" height="3" fill="#F0A000"/><rect x="6" y="6" width="3" height="3" fill="#8DA28D"/><rect x="10" y="6" width="3" height="3" fill="#8DA28D"/><rect x="2" y="10" width="3" height="3" fill="#4E6E6E"/><rect x="6" y="10" width="3" height="3" fill="#4E6E6E"/><rect x="10" y="10" width="3" height="3" fill="#4E6E6E"/></svg>
<div class="t " style="left:44px;top:589px;">Expandable Customer Login</div>
<svg class="a" style="left:24px;top:603px;width:16px;height:16px" viewBox="0 0 16 16"><path d="M2.5 0.5 H11 L14.5 4 V15.5 H2.5z" fill="#fff" stroke="#A8A8A8"/><path d="M11 0.5 V4 H14.5" fill="#F0F0F0" stroke="#A8A8A8"/><path d="M10.5 10.5 H3.5 Q3.8 13 6.3 13 Q7.8 13 8.8 12 L10 13.3 Q8.6 15 6 15 Q1.2 15 1.2 10.2 Q1.2 5.5 6 5.5 Q10.8 5.5 10.5 10.5z M3.6 9 H8.2 Q8 7.3 5.9 7.3 Q4 7.3 3.6 9z" fill="#1E88E8" stroke="#0A4AA8" stroke-width="0.5"/><path d="M0.8 14.5 Q-0.5 12 3 8 Q7 3.5 11 4 Q12.5 5 9.5 9" fill="none" stroke="#F0B020" stroke-width="1.3"/></svg>
<div class="t " style="left:44px;top:605px;">Expandable e-Requisitions</div>
<svg class="a" style="left:24px;top:619px;width:16px;height:16px" viewBox="0 0 16 16"><path d="M2.5 0.5 H11 L14.5 4 V15.5 H2.5z" fill="#fff" stroke="#A8A8A8"/><path d="M11 0.5 V4 H14.5" fill="#F0F0F0" stroke="#A8A8A8"/><path d="M10.5 10.5 H3.5 Q3.8 13 6.3 13 Q7.8 13 8.8 12 L10 13.3 Q8.6 15 6 15 Q1.2 15 1.2 10.2 Q1.2 5.5 6 5.5 Q10.8 5.5 10.5 10.5z M3.6 9 H8.2 Q8 7.3 5.9 7.3 Q4 7.3 3.6 9z" fill="#1E88E8" stroke="#0A4AA8" stroke-width="0.5"/><path d="M0.8 14.5 Q-0.5 12 3 8 Q7 3.5 11 4 Q12.5 5 9.5 9" fill="none" stroke="#F0B020" stroke-width="1.3"/></svg>
<div class="t " style="left:44px;top:621px;">Expandable Intelligence</div>
<svg class="a" style="left:24px;top:635px;width:16px;height:16px" viewBox="0 0 16 16"><path d="M2.5 0.5 H11 L14.5 4 V15.5 H2.5z" fill="#fff" stroke="#A8A8A8"/><path d="M11 0.5 V4 H14.5" fill="#F0F0F0" stroke="#A8A8A8"/><path d="M10.5 10.5 H3.5 Q3.8 13 6.3 13 Q7.8 13 8.8 12 L10 13.3 Q8.6 15 6 15 Q1.2 15 1.2 10.2 Q1.2 5.5 6 5.5 Q10.8 5.5 10.5 10.5z M3.6 9 H8.2 Q8 7.3 5.9 7.3 Q4 7.3 3.6 9z" fill="#1E88E8" stroke="#0A4AA8" stroke-width="0.5"/><path d="M0.8 14.5 Q-0.5 12 3 8 Q7 3.5 11 4 Q12.5 5 9.5 9" fill="none" stroke="#F0B020" stroke-width="1.3"/></svg>
<div class="t " style="left:44px;top:637px;">Expandable Intranet</div>
<svg class="a" style="left:24px;top:651px;width:16px;height:16px" viewBox="0 0 16 16"><path d="M2.5 0.5 H11 L14.5 4 V15.5 H2.5z" fill="#fff" stroke="#A8A8A8"/><path d="M11 0.5 V4 H14.5" fill="#F0F0F0" stroke="#A8A8A8"/><path d="M10.5 10.5 H3.5 Q3.8 13 6.3 13 Q7.8 13 8.8 12 L10 13.3 Q8.6 15 6 15 Q1.2 15 1.2 10.2 Q1.2 5.5 6 5.5 Q10.8 5.5 10.5 10.5z M3.6 9 H8.2 Q8 7.3 5.9 7.3 Q4 7.3 3.6 9z" fill="#1E88E8" stroke="#0A4AA8" stroke-width="0.5"/><path d="M0.8 14.5 Q-0.5 12 3 8 Q7 3.5 11 4 Q12.5 5 9.5 9" fill="none" stroke="#F0B020" stroke-width="1.3"/></svg>
<div class="t " style="left:44px;top:653px;">Expandable On Demand</div>
<svg class="a" style="left:24px;top:667px;width:16px;height:16px" viewBox="0 0 16 16"><rect x="0.5" y="0.5" width="15" height="15" fill="#fff" stroke="#6b6b5e"/><rect x="10" y="2" width="3" height="3" fill="#F0A000"/><rect x="6" y="6" width="3" height="3" fill="#8DA28D"/><rect x="10" y="6" width="3" height="3" fill="#8DA28D"/><rect x="2" y="10" width="3" height="3" fill="#4E6E6E"/><rect x="6" y="10" width="3" height="3" fill="#4E6E6E"/><rect x="10" y="10" width="3" height="3" fill="#4E6E6E"/></svg>
<div class="t " style="left:44px;top:669px;">Expandable Website</div>
<svg class="a" style="left:24px;top:683px;width:16px;height:16px" viewBox="0 0 16 16"><path d="M2.5 0.5 H11 L14.5 4 V15.5 H2.5z" fill="#fff" stroke="#A8A8A8"/><path d="M11 0.5 V4 H14.5" fill="#F0F0F0" stroke="#A8A8A8"/><path d="M10.5 10.5 H3.5 Q3.8 13 6.3 13 Q7.8 13 8.8 12 L10 13.3 Q8.6 15 6 15 Q1.2 15 1.2 10.2 Q1.2 5.5 6 5.5 Q10.8 5.5 10.5 10.5z M3.6 9 H8.2 Q8 7.3 5.9 7.3 Q4 7.3 3.6 9z" fill="#1E88E8" stroke="#0A4AA8" stroke-width="0.5"/><path d="M0.8 14.5 Q-0.5 12 3 8 Q7 3.5 11 4 Q12.5 5 9.5 9" fill="none" stroke="#F0B020" stroke-width="1.3"/></svg>
<div class="t " style="left:44px;top:685px;">Microsoft Office Live Meeting</div>
<svg class="a" style="left:24px;top:699px;width:16px;height:16px" viewBox="0 0 16 16"><path d="M2 3 L11.5 0.8 L14.5 11.5 L5 14.5z" fill="#fff" stroke="#F00000" stroke-width="2"/><path d="M10 4.5 Q9 3.2 7 3.8 Q5 4.5 5.8 6.5 Q6.5 8 8.5 8 Q10.5 8.5 10 10.5 Q9.3 12 7 12 Q5.5 11.8 5 10.8" fill="none" stroke="#E00000" stroke-width="1.6"/></svg>
<div class="t " style="left:44px;top:701px;">SalesForce.com Login</div>
<div class="a" style="left:216px;top:83px;width:809px;height:656px;border-top:1px solid #ACA899;border-left:1px solid #ACA899;border-right:1px solid #fff;border-bottom:1px solid #fff;box-shadow:inset 1px 1px 0 #716F64"></div>
<div class="a" style="left:235px;top:124px;width:639px;height:413px;border-radius:7px 7px 0 0;background:#7A96E2;box-shadow:inset 0 -1px 0 #5A6ED8,inset 1px 0 0 #5A6ED8,inset -1px 0 0 #5A6ED8"></div><div class="a" style="left:235px;top:124px;width:639px;height:30px;border-radius:7px 7px 0 0;background:linear-gradient(to bottom,#6A86DC 0px,#6A86DC 1px,#A3BDEE 1px,#9AB4EA 3px,#7D9AE0 6px,#7896DF 15px,#7A9FE5 22px,#7AA2E8 27px,#6C88DA 28px,#6A84D8 30px)"></div><div class="a" style="left:235px;top:131px;width:1px;height:406px;background:#5A6ED8"></div><div class="a" style="left:873px;top:131px;width:1px;height:406px;background:#5A6ED8"></div><div class="a" style="left:235px;top:536px;width:639px;height:1px;background:#5A6ED8"></div><svg class="a" style="left:241px;top:132px;width:16px;height:16px" viewBox="0 0 16 16"><rect x="0.5" y="0.5" width="15" height="15" fill="#fff" stroke="#6b6b5e"/><rect x="10" y="2" width="3" height="3" fill="#F0A000"/><rect x="6" y="6" width="3" height="3" fill="#8DA28D"/><rect x="10" y="6" width="3" height="3" fill="#8DA28D"/><rect x="2" y="10" width="3" height="3" fill="#4E6E6E"/><rect x="6" y="10" width="3" height="3" fill="#4E6E6E"/><rect x="10" y="10" width="3" height="3" fill="#4E6E6E"/></svg><div class="ttl" style="left:260px;top:133px;color:#D8E4F8;">Customer Serial Numbers</div><div class="xb" style="left:801px;top:130px;background:linear-gradient(135deg,#9CB4F0,#6F90E6);border-color:#E0E8FA"><div class="a" style="left:5px;top:12px;width:7px;height:3px;background:#fff"></div></div><div class="xb" style="left:824px;top:130px;background:linear-gradient(135deg,#9CB4F0,#6F90E6);border-color:#E0E8FA"><div class="a" style="left:4px;top:4px;width:11px;height:11px;border:1px solid #fff;border-top-width:3px"></div></div><div class="xb" style="left:847px;top:130px;background:linear-gradient(135deg,#C89AA8,#A87888);border-color:#E0E8FA"><svg class="a" style="left:4px;top:4px;width:11px;height:11px"><path d="M1 1L10 10M10 1L1 10" stroke="#fff" stroke-width="2"/></svg></div><div class="a" style="left:239px;top:154px;width:631px;height:379px;background:#ECE9D8;border-top:1px solid #fff"></div>
<div class="tb" style="left:243px;top:158px;width:25px;height:25px"><svg style="left:4px;top:4px" viewBox="0 0 16 16"><path d="M4 0.5 H12.5 L8.5 4.5 H10.5 L6 9 H8 L2 15.8 L3.8 10 H1.5 L4 6 H1.5z" fill="#FFF000" stroke="#000" stroke-width="1"/><path d="M5 2h3M4 5h2M5 7h2" stroke="#fff" stroke-width="0.8"/></svg></div><div class="tb" style="left:268px;top:158px;width:25px;height:25px"><svg style="left:4px;top:4px" viewBox="0 0 16 16"><path d="M0.5 5.5 L3 0.5 L5.5 5.5 M1.5 3.8h3" fill="none" stroke="#000" stroke-width="1.6"/><path d="M11.5 10.5h4 L11.5 15 h4" fill="none" stroke="#000" stroke-width="1.5"/><path d="M9 2.5 H13.5 Q15.5 2.5 15.5 4.5 Q15.5 6.5 13.5 6.5 H3.5 Q1.5 6.5 1.5 8.8 Q1.5 11 3.5 11 H8" fill="none" stroke="#000" stroke-width="1.2"/><path d="M7 2.5 L10 0 V5z M10.5 11 L7.5 8.5 V13.5z" fill="#000"/></svg></div><div class="tb" style="left:318px;top:158px;width:25px;height:25px"><svg style="left:4px;top:4px" viewBox="0 0 16 16"><rect x="0.5" y="0.5" width="6" height="6" fill="#80F0F0" stroke="#000"/><path d="M1 1h1v1H1zM3 1h1v1H3zM5 1h1v1H5zM2 2h1v1H2zM4 2h1v1H4zM1 3h1v1H1zM3 3h1v1H3zM5 3h1v1H5zM2 4h1v1H2zM4 4h1v1H4zM1 5h1v1H1zM3 5h1v1H3zM5 5h1v1H5z" fill="#00C8D0"/><rect x="7.5" y="9.5" width="7" height="6" fill="#80F0F0" stroke="#000"/><path d="M8 10h1v1H8zM10 10h1v1h-1zM12 10h1v1h-1zM9 11h1v1H9zM11 11h1v1h-1zM13 11h1v1h-1zM8 12h1v1H8zM10 12h1v1h-1zM12 12h1v1h-1zM9 13h1v1H9zM11 13h1v1h-1zM13 13h1v1h-1z" fill="#00C8D0"/><path d="M7 3.5 H11 V7" fill="none" stroke="#000" stroke-width="1.2"/><path d="M8.5 6.5 H13.5 L11 9.5z" fill="#000"/></svg></div><div class="tb" style="left:343px;top:158px;width:25px;height:25px"><svg style="left:4px;top:4px" viewBox="0 0 16 16"><rect x="0" y="0" width="16" height="17" fill="#B4B4B4"/><rect x="0.5" y="9.5" width="5" height="6" fill="#fff" stroke="#000"/><rect x="5.5" y="9.5" width="5" height="6" fill="#fff" stroke="#000"/><rect x="1" y="10" width="4" height="1" fill="#00D0D0"/><rect x="6" y="10" width="4" height="1" fill="#00D0D0"/><path d="M2 12.5h2M2 14h2M7 12.5h2M7 14h2" stroke="#0000A0"/><path d="M4.5 9 V4.5 Q4.5 3 6 3 H7" fill="none" stroke="#000" stroke-width="1.6"/><path d="M6.5 0.5 L9.5 3 L6.5 5.5z" fill="#000"/><path d="M10 2 H14.5 L12.5 5 H14 L9.5 10 L11 6 H9.5z" fill="#FFF000" stroke="#000" stroke-width="0.8"/></svg></div><div class="tb" style="left:368px;top:158px;width:25px;height:25px"><svg style="left:4px;top:4px" viewBox="0 0 16 16"><rect x="0" y="0" width="16" height="17" fill="#B4B4B4"/><rect x="0.5" y="9.5" width="5" height="6" fill="#fff" stroke="#000"/><rect x="5.5" y="9.5" width="5" height="6" fill="#fff" stroke="#000"/><rect x="1" y="10" width="4" height="1" fill="#00D0D0"/><rect x="6" y="10" width="4" height="1" fill="#00D0D0"/><path d="M2 12.5h2M2 14h2M7 12.5h2M7 14h2" stroke="#0000A0"/><path d="M4.5 9 V4.5 Q4.5 3 6 3 H7" fill="none" stroke="#000" stroke-width="1.6"/><path d="M6.5 0.5 L9.5 3 L6.5 5.5z" fill="#000"/><path d="M7 1.5v3M9 1.5v3M11 1.5v3M13 1.5v3" stroke="#000"/><rect x="6.5" y="3.5" width="8" height="7" fill="#fff" stroke="#000"/><path d="M7.5 6h6M7.5 8h6" stroke="#00D0D0"/><path d="M8 1h1v2H8zM10 1h1v2h-1zM12 1h1v2h-1z" fill="#000"/></svg></div><div class="tb" style="left:393px;top:158px;width:25px;height:25px"><svg style="left:4px;top:4px" viewBox="0 0 16 16"><rect x="1.5" y="2.5" width="10" height="13" rx="1" fill="#fff" stroke="#000"/><rect x="3.5" y="1.5" width="10.5" height="14" rx="1" fill="#fff" stroke="#000"/><path d="M5 4h8M5 6.5h8M5 9h8M5 11.5h8" stroke="#00E0E8" stroke-width="1.2"/><path d="M6 5.5h2M10 5.5h2M6 8h2M6 10.5h2" stroke="#404040" stroke-width="0.8"/><path d="M5 0v3M7 0v3M9 0v3M11 0v3M13 0v3" stroke="#000"/></svg></div><div class="tb" style="left:444px;top:158px;width:24px;height:25px"><svg style="left:3px;top:4px" viewBox="0 0 16 16"><rect x="3" y="4" width="2" height="7" fill="#000"/><path d="M5 7.5 L12.5 4 V11z" fill="#000"/></svg></div><div class="tb" style="left:468px;top:158px;width:24px;height:25px"><svg style="left:3px;top:4px" viewBox="0 0 16 16"><path d="M4 7.5 L11.5 4 V11z" fill="#000"/></svg></div><div class="tb" style="left:492px;top:158px;width:24px;height:25px"><svg style="left:3px;top:4px" viewBox="0 0 16 16"><path d="M12 7.5 L4.5 4 V11z" fill="#000"/></svg></div><div class="tb" style="left:516px;top:158px;width:24px;height:25px"><svg style="left:3px;top:4px" viewBox="0 0 16 16"><rect x="11" y="4" width="2" height="7" fill="#000"/><path d="M11 7.5 L3.5 4 V11z" fill="#000"/></svg></div><div class="t" style="left:669px;top:164px">Records:</div><div class="a" style="left:765px;top:158px;width:100px;height:25px"></div><div class="tb" style="left:765px;top:158px;width:25px;height:25px"><svg style="left:4px;top:4px" viewBox="0 0 16 16"><path d="M3.5 0.5 H8 L10.5 3 V8.5 H3.5z" fill="#fff" stroke="#000"/><path d="M5 2.5h1M5 4.5h2M7 6.5h2M5 6.5h1" stroke="#000"/><rect x="0.5" y="8.5" width="15" height="4" fill="#fff" stroke="#000"/><path d="M2 10.5h11" stroke="#A0A0A0" stroke-dasharray="1 1"/><rect x="13" y="10" width="1" height="1" fill="#FF0000"/><rect x="0.5" y="12.5" width="15" height="2.5" fill="#C0C0C0" stroke="#000"/></svg></div><div class="tb" style="left:790px;top:158px;width:25px;height:25px"><svg style="left:4px;top:4px" viewBox="0 0 16 16"><path d="M0.5 2.5 H7 L10.5 6 V14.5 H0.5z" fill="#fff" stroke="#000"/><path d="M2 5h4M2 7h5M2 9h4M2 11h4M2 13h4" stroke="#000" stroke-width="0.9"/><rect x="8" y="8" width="4" height="5" fill="#fff" stroke="#000" stroke-width="0.8"/><rect x="9" y="9" width="1" height="3" fill="#00C000"/><rect x="10" y="9" width="1.5" height="3" fill="#2020F0"/><path d="M11.5 12.5 L14.5 15.5" stroke="#000" stroke-width="1.3"/></svg></div><div class="tb" style="left:815px;top:158px;width:25px;height:25px"><svg style="left:4px;top:4px" viewBox="0 0 16 16"><path d="M0.5 1.5 H6 L9.5 5 V13.5 H0.5z" fill="#fff" stroke="#000"/><path d="M2 3.5h2M2 5.5h2M2 7.5h2M2 9.5h2M2 11.5h2" stroke="#000" stroke-width="0.9"/><path d="M6 9 H10 V6 L15.5 11 L10 16 V13 H6z" fill="#FF0000" stroke="#800000" stroke-width="0.5"/></svg></div><div class="tb" style="left:840px;top:158px;width:25px;height:25px"><svg style="left:4px;top:4px" viewBox="0 0 16 16"><path d="M3.5 5.5 Q3.5 0.8 8.8 0.8 Q14 0.8 14 4.8 Q14 7.5 10.5 8.8 L10 11 H6.8 L7.3 7.5 Q10.3 6.5 10.3 4.8 Q10.3 3.5 8.8 3.5 Q7.3 3.5 7 5.5z" fill="#18B8C0" stroke="#002080" stroke-width="0.9"/><path d="M5 4 Q6 2 9 2" fill="none" stroke="#80F0F0"/><rect x="6.5" y="12.3" width="3.3" height="3" rx="1" fill="#18B8C0" stroke="#002080" stroke-width="0.9"/></svg></div><div class="a" style="left:239px;top:186px;width:631px;height:1px;background:#ACA899"></div><div class="a" style="left:239px;top:187px;width:631px;height:1px;background:#fff"></div>
<div class="fld" style="left:716px;top:160px;width:44px;height:22px;"><div class="v" style="left:1px;top:4px">213</div></div>
<div class="a" style="left:246px;top:200px;width:617px;height:103px;border:1px solid #D0D0BF;box-shadow:inset 1px 1px 0 #fff,1px 1px 0 #fff"></div><div class="t" style="left:252px;top:194px;background:#ECE9D8;padding:0 1px">Search Criteria</div>
<div class="t " style="left:259px;top:251px;">Serial Number</div>
<div class="t " style="left:279px;top:281px;">SN Status</div>
<div class="a" style="left:245px;top:305px;width:631px;height:161px;background:#fff;border-top:2px solid #858379;border-left:2px solid #858379;border-bottom:1px solid #fff;overflow:hidden"><div class="a" style="left:0;top:0;width:12px;height:19px;background:#ECE9D8;border-top:1px solid #fff;border-left:1px solid #fff;border-right:1px solid #000;border-bottom:1px solid #000"></div><div class="a" style="left:12px;top:0;width:631px;height:19px;background:#ECE9D8;border-top:1px solid #fff;border-left:1px solid #fff;border-bottom:1px solid #000"></div><div class="t" style="left:13px;top:3px">Part ID</div><div class="a" style="left:0;top:19px;width:12px;height:19px;background:#ECE9D8;border-top:1px solid #fff;border-left:1px solid #fff;border-right:1px solid #000;border-bottom:1px solid #000"></div><div class="a" style="left:12px;top:37px;width:631px;height:1px;background:#D8D8D8"></div><div class="t" style="left:13px;top:22px">22503-01</div><div class="a" style="left:0;top:38px;width:12px;height:19px;background:#ECE9D8;border-top:1px solid #fff;border-left:1px solid #fff;border-right:1px solid #000;border-bottom:1px solid #000"></div><div class="a" style="left:12px;top:56px;width:631px;height:1px;background:#D8D8D8"></div><div class="t" style="left:13px;top:41px">22503-02</div><div class="a" style="left:0;top:57px;width:12px;height:19px;background:#ECE9D8;border-top:1px solid #fff;border-left:1px solid #fff;border-right:1px solid #000;border-bottom:1px solid #000"></div><div class="a" style="left:12px;top:75px;width:631px;height:1px;background:#D8D8D8"></div><div class="t" style="left:13px;top:60px">22504-01</div><div class="a" style="left:0;top:76px;width:12px;height:19px;background:#ECE9D8;border-top:1px solid #fff;border-left:1px solid #fff;border-right:1px solid #000;border-bottom:1px solid #000"></div><div class="a" style="left:12px;top:94px;width:631px;height:1px;background:#D8D8D8"></div><div class="t" style="left:13px;top:79px">22504-02</div><div class="a" style="left:0;top:95px;width:12px;height:19px;background:#ECE9D8;border-top:1px solid #fff;border-left:1px solid #fff;border-right:1px solid #000;border-bottom:1px solid #000"></div><div class="a" style="left:12px;top:113px;width:631px;height:1px;background:#D8D8D8"></div><div class="t" style="left:13px;top:98px">3-A21-L1</div><div class="a" style="left:0;top:114px;width:12px;height:19px;background:#ECE9D8;border-top:1px solid #fff;border-left:1px solid #fff;border-right:1px solid #000;border-bottom:1px solid #000"></div><div class="a" style="left:12px;top:132px;width:631px;height:1px;background:#D8D8D8"></div><div class="t" style="left:13px;top:117px">3-A21-L2</div><svg class="a" style="left:2px;top:117px;width:8px;height:11px" viewBox="0 0 8 11"><path d="M1 0 L7 5.5 L1 11z" fill="#000"/></svg><div class="a" style="left:0;top:142px;width:631px;height:16px;background:linear-gradient(to bottom,#F3F1EC,#FEFEFB)"></div><div class="sb" style="left:1px;top:143px;width:15px;height:14px"><svg class="a" style="left:2px;top:1px;width:9px;height:9px" viewBox="0 0 9 9"><path d="M6 1 L2.5 4.5 L6 8" fill="none" stroke="#4D6185" stroke-width="2"/></svg></div><div class="sb" style="left:18px;top:143px;width:15px;height:14px"><svg class="a" style="left:3px;top:2px;width:8px;height:8px"><path d="M0.5 1v6M2.5 1v6M4.5 1v6M6.5 1v6" stroke="#EEF4FF"/><path d="M1.5 2v6M3.5 2v6M5.5 2v6M7.5 2v6" stroke="#8CA8E8"/></svg></div></div>
<div class="a" style="left:239px;top:472px;width:631px;height:1px;background:#ACA899"></div>
<div class="a" style="left:239px;top:473px;width:631px;height:60px;background:#D4D0C8;border-left:1px solid #fff;border-top:1px solid #fff"></div>
<div class="a" style="left:299px;top:214px;width:639px;height:413px;border-radius:7px 7px 0 0;background:#7A96E2;box-shadow:inset 0 -1px 0 #5A6ED8,inset 1px 0 0 #5A6ED8,inset -1px 0 0 #5A6ED8"></div><div class="a" style="left:299px;top:214px;width:639px;height:30px;border-radius:7px 7px 0 0;background:linear-gradient(to bottom,#6A86DC 0px,#6A86DC 1px,#A3BDEE 1px,#9AB4EA 3px,#7D9AE0 6px,#7896DF 15px,#7A9FE5 22px,#7AA2E8 27px,#6C88DA 28px,#6A84D8 30px)"></div><div class="a" style="left:299px;top:221px;width:1px;height:406px;background:#5A6ED8"></div><div class="a" style="left:937px;top:221px;width:1px;height:406px;background:#5A6ED8"></div><div class="a" style="left:299px;top:626px;width:639px;height:1px;background:#5A6ED8"></div><svg class="a" style="left:305px;top:222px;width:16px;height:16px" viewBox="0 0 16 16"><rect x="0.5" y="0.5" width="15" height="15" fill="#fff" stroke="#6b6b5e"/><rect x="10" y="2" width="3" height="3" fill="#F0A000"/><rect x="6" y="6" width="3" height="3" fill="#8DA28D"/><rect x="10" y="6" width="3" height="3" fill="#8DA28D"/><rect x="2" y="10" width="3" height="3" fill="#4E6E6E"/><rect x="6" y="10" width="3" height="3" fill="#4E6E6E"/><rect x="10" y="10" width="3" height="3" fill="#4E6E6E"/></svg><div class="ttl" style="left:324px;top:223px;color:#D8E4F8;">Serial Number Cross References</div><div class="xb" style="left:865px;top:220px;background:linear-gradient(135deg,#9CB4F0,#6F90E6);border-color:#E0E8FA"><div class="a" style="left:5px;top:12px;width:7px;height:3px;background:#fff"></div></div><div class="xb" style="left:888px;top:220px;background:linear-gradient(135deg,#9CB4F0,#6F90E6);border-color:#E0E8FA"><div class="a" style="left:4px;top:4px;width:11px;height:11px;border:1px solid #fff;border-top-width:3px"></div></div><div class="xb" style="left:911px;top:220px;background:linear-gradient(135deg,#C89AA8,#A87888);border-color:#E0E8FA"><svg class="a" style="left:4px;top:4px;width:11px;height:11px"><path d="M1 1L10 10M10 1L1 10" stroke="#fff" stroke-width="2"/></svg></div><div class="a" style="left:303px;top:244px;width:631px;height:379px;background:#ECE9D8;border-top:1px solid #fff"></div>
<div class="tb" style="left:307px;top:248px;width:25px;height:25px"><svg style="left:4px;top:4px" viewBox="0 0 16 16"><path d="M4 0.5 H12.5 L8.5 4.5 H10.5 L6 9 H8 L2 15.8 L3.8 10 H1.5 L4 6 H1.5z" fill="#FFF000" stroke="#000" stroke-width="1"/><path d="M5 2h3M4 5h2M5 7h2" stroke="#fff" stroke-width="0.8"/></svg></div><div class="tb" style="left:332px;top:248px;width:25px;height:25px"><svg style="left:4px;top:4px" viewBox="0 0 16 16"><path d="M0.5 5.5 L3 0.5 L5.5 5.5 M1.5 3.8h3" fill="none" stroke="#000" stroke-width="1.6"/><path d="M11.5 10.5h4 L11.5 15 h4" fill="none" stroke="#000" stroke-width="1.5"/><path d="M9 2.5 H13.5 Q15.5 2.5 15.5 4.5 Q15.5 6.5 13.5 6.5 H3.5 Q1.5 6.5 1.5 8.8 Q1.5 11 3.5 11 H8" fill="none" stroke="#000" stroke-width="1.2"/><path d="M7 2.5 L10 0 V5z M10.5 11 L7.5 8.5 V13.5z" fill="#000"/></svg></div><div class="tb" style="left:382px;top:248px;width:25px;height:25px"><svg style="left:4px;top:4px" viewBox="0 0 16 16"><rect x="0.5" y="0.5" width="6" height="6" fill="#80F0F0" stroke="#000"/><path d="M1 1h1v1H1zM3 1h1v1H3zM5 1h1v1H5zM2 2h1v1H2zM4 2h1v1H4zM1 3h1v1H1zM3 3h1v1H3zM5 3h1v1H5zM2 4h1v1H2zM4 4h1v1H4zM1 5h1v1H1zM3 5h1v1H3zM5 5h1v1H5z" fill="#00C8D0"/><rect x="7.5" y="9.5" width="7" height="6" fill="#80F0F0" stroke="#000"/><path d="M8 10h1v1H8zM10 10h1v1h-1zM12 10h1v1h-1zM9 11h1v1H9zM11 11h1v1h-1zM13 11h1v1h-1zM8 12h1v1H8zM10 12h1v1h-1zM12 12h1v1h-1zM9 13h1v1H9zM11 13h1v1h-1zM13 13h1v1h-1z" fill="#00C8D0"/><path d="M7 3.5 H11 V7" fill="none" stroke="#000" stroke-width="1.2"/><path d="M8.5 6.5 H13.5 L11 9.5z" fill="#000"/></svg></div><div class="tb" style="left:407px;top:248px;width:25px;height:25px"><svg style="left:4px;top:4px" viewBox="0 0 16 16"><rect x="0" y="0" width="16" height="17" fill="#B4B4B4"/><rect x="0.5" y="9.5" width="5" height="6" fill="#fff" stroke="#000"/><rect x="5.5" y="9.5" width="5" height="6" fill="#fff" stroke="#000"/><rect x="1" y="10" width="4" height="1" fill="#00D0D0"/><rect x="6" y="10" width="4" height="1" fill="#00D0D0"/><path d="M2 12.5h2M2 14h2M7 12.5h2M7 14h2" stroke="#0000A0"/><path d="M4.5 9 V4.5 Q4.5 3 6 3 H7" fill="none" stroke="#000" stroke-width="1.6"/><path d="M6.5 0.5 L9.5 3 L6.5 5.5z" fill="#000"/><path d="M10 2 H14.5 L12.5 5 H14 L9.5 10 L11 6 H9.5z" fill="#FFF000" stroke="#000" stroke-width="0.8"/></svg></div><div class="tb" style="left:432px;top:248px;width:25px;height:25px"><svg style="left:4px;top:4px" viewBox="0 0 16 16"><rect x="0" y="0" width="16" height="17" fill="#B4B4B4"/><rect x="0.5" y="9.5" width="5" height="6" fill="#fff" stroke="#000"/><rect x="5.5" y="9.5" width="5" height="6" fill="#fff" stroke="#000"/><rect x="1" y="10" width="4" height="1" fill="#00D0D0"/><rect x="6" y="10" width="4" height="1" fill="#00D0D0"/><path d="M2 12.5h2M2 14h2M7 12.5h2M7 14h2" stroke="#0000A0"/><path d="M4.5 9 V4.5 Q4.5 3 6 3 H7" fill="none" stroke="#000" stroke-width="1.6"/><path d="M6.5 0.5 L9.5 3 L6.5 5.5z" fill="#000"/><path d="M7 1.5v3M9 1.5v3M11 1.5v3M13 1.5v3" stroke="#000"/><rect x="6.5" y="3.5" width="8" height="7" fill="#fff" stroke="#000"/><path d="M7.5 6h6M7.5 8h6" stroke="#00D0D0"/><path d="M8 1h1v2H8zM10 1h1v2h-1zM12 1h1v2h-1z" fill="#000"/></svg></div><div class="tb" style="left:457px;top:248px;width:25px;height:25px"><svg style="left:4px;top:4px" viewBox="0 0 16 16"><rect x="1.5" y="2.5" width="10" height="13" rx="1" fill="#fff" stroke="#000"/><rect x="3.5" y="1.5" width="10.5" height="14" rx="1" fill="#fff" stroke="#000"/><path d="M5 4h8M5 6.5h8M5 9h8M5 11.5h8" stroke="#00E0E8" stroke-width="1.2"/><path d="M6 5.5h2M10 5.5h2M6 8h2M6 10.5h2" stroke="#404040" stroke-width="0.8"/><path d="M5 0v3M7 0v3M9 0v3M11 0v3M13 0v3" stroke="#000"/></svg></div><div class="tb" style="left:508px;top:248px;width:24px;height:25px"><svg style="left:3px;top:4px" viewBox="0 0 16 16"><rect x="3" y="4" width="2" height="7" fill="#000"/><path d="M5 7.5 L12.5 4 V11z" fill="#000"/></svg></div><div class="tb" style="left:532px;top:248px;width:24px;height:25px"><svg style="left:3px;top:4px" viewBox="0 0 16 16"><path d="M4 7.5 L11.5 4 V11z" fill="#000"/></svg></div><div class="tb" style="left:556px;top:248px;width:24px;height:25px"><svg style="left:3px;top:4px" viewBox="0 0 16 16"><path d="M12 7.5 L4.5 4 V11z" fill="none" stroke="#A8A498"/><path d="M5.5 11.5 L13 8" stroke="#fff"/></svg></div><div class="tb" style="left:580px;top:248px;width:24px;height:25px"><svg style="left:3px;top:4px" viewBox="0 0 16 16"><path d="M11 7.5 L3.5 4 V11z" fill="none" stroke="#A8A498"/><path d="M12.5 4v7" stroke="#A8A498"/><path d="M13.5 5v7" stroke="#fff"/></svg></div><div class="t" style="left:733px;top:254px">Records:</div><div class="a" style="left:829px;top:248px;width:100px;height:25px"></div><div class="tb" style="left:829px;top:248px;width:25px;height:25px"><svg style="left:4px;top:4px" viewBox="0 0 16 16"><path d="M3.5 0.5 H8 L10.5 3 V8.5 H3.5z" fill="#fff" stroke="#000"/><path d="M5 2.5h1M5 4.5h2M7 6.5h2M5 6.5h1" stroke="#000"/><rect x="0.5" y="8.5" width="15" height="4" fill="#fff" stroke="#000"/><path d="M2 10.5h11" stroke="#A0A0A0" stroke-dasharray="1 1"/><rect x="13" y="10" width="1" height="1" fill="#FF0000"/><rect x="0.5" y="12.5" width="15" height="2.5" fill="#C0C0C0" stroke="#000"/></svg></div><div class="tb" style="left:854px;top:248px;width:25px;height:25px"><svg style="left:4px;top:4px" viewBox="0 0 16 16"><path d="M0.5 2.5 H7 L10.5 6 V14.5 H0.5z" fill="#fff" stroke="#000"/><path d="M2 5h4M2 7h5M2 9h4M2 11h4M2 13h4" stroke="#000" stroke-width="0.9"/><rect x="8" y="8" width="4" height="5" fill="#fff" stroke="#000" stroke-width="0.8"/><rect x="9" y="9" width="1" height="3" fill="#00C000"/><rect x="10" y="9" width="1.5" height="3" fill="#2020F0"/><path d="M11.5 12.5 L14.5 15.5" stroke="#000" stroke-width="1.3"/></svg></div><div class="tb" style="left:879px;top:248px;width:25px;height:25px"><svg style="left:4px;top:4px" viewBox="0 0 16 16"><path d="M0.5 1.5 H6 L9.5 5 V13.5 H0.5z" fill="#fff" stroke="#000"/><path d="M2 3.5h2M2 5.5h2M2 7.5h2M2 9.5h2M2 11.5h2" stroke="#000" stroke-width="0.9"/><path d="M6 9 H10 V6 L15.5 11 L10 16 V13 H6z" fill="#FF0000" stroke="#800000" stroke-width="0.5"/></svg></div><div class="tb" style="left:904px;top:248px;width:25px;height:25px"><svg style="left:4px;top:4px" viewBox="0 0 16 16"><path d="M3.5 5.5 Q3.5 0.8 8.8 0.8 Q14 0.8 14 4.8 Q14 7.5 10.5 8.8 L10 11 H6.8 L7.3 7.5 Q10.3 6.5 10.3 4.8 Q10.3 3.5 8.8 3.5 Q7.3 3.5 7 5.5z" fill="#18B8C0" stroke="#002080" stroke-width="0.9"/><path d="M5 4 Q6 2 9 2" fill="none" stroke="#80F0F0"/><rect x="6.5" y="12.3" width="3.3" height="3" rx="1" fill="#18B8C0" stroke="#002080" stroke-width="0.9"/></svg></div><div class="a" style="left:303px;top:276px;width:631px;height:1px;background:#ACA899"></div><div class="a" style="left:303px;top:277px;width:631px;height:1px;background:#fff"></div>
<div class="fld" style="left:780px;top:250px;width:44px;height:22px;"><div class="v" style="left:1px;top:4px">106</div></div>
<div class="a" style="left:310px;top:290px;width:617px;height:103px;border:1px solid #D0D0BF;box-shadow:inset 1px 1px 0 #fff,1px 1px 0 #fff"></div><div class="t" style="left:316px;top:284px;background:#ECE9D8;padding:0 1px">Search Criteria</div>
<div class="t " style="left:335px;top:311px;">Assembly</div>
<div class="t " style="left:329px;top:341px;">Component</div>
<div class="t " style="left:326px;top:371px;">Effective</div>
<div class="a" style="left:309px;top:395px;width:631px;height:162px;background:#fff;border-top:2px solid #858379;border-left:2px solid #858379;border-bottom:1px solid #fff;overflow:hidden"><div class="a" style="left:0;top:0;width:12px;height:19px;background:#ECE9D8;border-top:1px solid #fff;border-left:1px solid #fff;border-right:1px solid #000;border-bottom:1px solid #000"></div><div class="a" style="left:12px;top:0;width:631px;height:19px;background:#ECE9D8;border-top:1px solid #fff;border-left:1px solid #fff;border-bottom:1px solid #000"></div><div class="t" style="left:13px;top:3px">Assembly</div><div class="a" style="left:0;top:19px;width:12px;height:19px;background:#ECE9D8;border-top:1px solid #fff;border-left:1px solid #fff;border-right:1px solid #000;border-bottom:1px solid #000"></div><div class="a" style="left:12px;top:37px;width:631px;height:1px;background:#D8D8D8"></div><div class="t" style="left:13px;top:22px">NXT-M1</div><div class="a" style="left:0;top:38px;width:12px;height:19px;background:#ECE9D8;border-top:1px solid #fff;border-left:1px solid #fff;border-right:1px solid #000;border-bottom:1px solid #000"></div><div class="a" style="left:12px;top:56px;width:631px;height:1px;background:#D8D8D8"></div><div class="t" style="left:13px;top:41px">NXT-M2</div><div class="a" style="left:0;top:57px;width:12px;height:19px;background:#ECE9D8;border-top:1px solid #fff;border-left:1px solid #fff;border-right:1px solid #000;border-bottom:1px solid #000"></div><div class="a" style="left:12px;top:75px;width:631px;height:1px;background:#D8D8D8"></div><div class="t" style="left:13px;top:60px">NXT-M3</div><div class="a" style="left:0;top:76px;width:12px;height:19px;background:#ECE9D8;border-top:1px solid #fff;border-left:1px solid #fff;border-right:1px solid #000;border-bottom:1px solid #000"></div><div class="a" style="left:12px;top:94px;width:631px;height:1px;background:#D8D8D8"></div><div class="t" style="left:13px;top:79px">0010001</div><div class="a" style="left:0;top:95px;width:12px;height:19px;background:#ECE9D8;border-top:1px solid #fff;border-left:1px solid #fff;border-right:1px solid #000;border-bottom:1px solid #000"></div><div class="a" style="left:12px;top:113px;width:631px;height:1px;background:#D8D8D8"></div><div class="t" style="left:13px;top:98px">ZHM2001</div><div class="a" style="left:0;top:114px;width:12px;height:19px;background:#ECE9D8;border-top:1px solid #fff;border-left:1px solid #fff;border-right:1px solid #000;border-bottom:1px solid #000"></div><div class="a" style="left:12px;top:132px;width:631px;height:1px;background:#D8D8D8"></div><div class="t" style="left:13px;top:117px">ZHM2002</div><svg class="a" style="left:2px;top:117px;width:8px;height:11px" viewBox="0 0 8 11"><path d="M1 0 L7 5.5 L1 11z" fill="#000"/></svg><div class="a" style="left:0;top:142px;width:631px;height:16px;background:linear-gradient(to bottom,#F3F1EC,#FEFEFB)"></div><div class="sb" style="left:1px;top:143px;width:15px;height:14px"><svg class="a" style="left:2px;top:1px;width:9px;height:9px" viewBox="0 0 9 9"><path d="M6 1 L2.5 4.5 L6 8" fill="none" stroke="#4D6185" stroke-width="2"/></svg></div><div class="sb" style="left:18px;top:143px;width:15px;height:14px"><svg class="a" style="left:3px;top:2px;width:8px;height:8px"><path d="M0.5 1v6M2.5 1v6M4.5 1v6M6.5 1v6" stroke="#EEF4FF"/><path d="M1.5 2v6M3.5 2v6M5.5 2v6M7.5 2v6" stroke="#8CA8E8"/></svg></div></div>
<div class="a" style="left:303px;top:562px;width:631px;height:1px;background:#ACA899"></div>
<div class="a" style="left:303px;top:563px;width:631px;height:60px;background:#D4D0C8;border-left:1px solid #fff;border-top:1px solid #fff"></div>
<div class="a" style="left:357px;top:307px;width:639px;height:405px;border-radius:7px 7px 0 0;background:#0054E8;box-shadow:inset 0 -1px 0 #0018C8,inset 1px 0 0 #0018C8,inset -1px 0 0 #0018C8"></div><div class="a" style="left:357px;top:307px;width:639px;height:30px;border-radius:7px 7px 0 0;background:linear-gradient(to bottom,#0A48D8 0px,#0A48D8 1px,#3D95FF 1px,#3D95FF 3px,#0A62EA 3px,#0055DE 5px,#0055DE 15px,#005CE8 17px,#0064F5 21px,#0064F5 28px,#0048D8 28px,#0038C8 30px)"></div><div class="a" style="left:357px;top:314px;width:1px;height:398px;background:#0018C8"></div><div class="a" style="left:995px;top:314px;width:1px;height:398px;background:#0018C8"></div><div class="a" style="left:357px;top:711px;width:639px;height:1px;background:#0018C8"></div><svg class="a" style="left:363px;top:315px;width:16px;height:16px" viewBox="0 0 16 16"><rect x="0.5" y="0.5" width="15" height="15" fill="#fff" stroke="#6b6b5e"/><rect x="10" y="2" width="3" height="3" fill="#F0A000"/><rect x="6" y="6" width="3" height="3" fill="#8DA28D"/><rect x="10" y="6" width="3" height="3" fill="#8DA28D"/><rect x="2" y="10" width="3" height="3" fill="#4E6E6E"/><rect x="6" y="10" width="3" height="3" fill="#4E6E6E"/><rect x="10" y="10" width="3" height="3" fill="#4E6E6E"/></svg><div class="ttl" style="left:382px;top:316px;color:#fff;text-shadow:1px 1px 0 #0A1E6E;">Serial Number Editor - Edit</div><div class="xb" style="left:923px;top:313px;background:linear-gradient(135deg,#5A95FA,#2060E8);border-color:#fff"><div class="a" style="left:5px;top:12px;width:7px;height:3px;background:#fff"></div></div><div class="xb" style="left:946px;top:313px;background:linear-gradient(135deg,#5A95FA,#2060E8);border-color:#fff"><div class="a" style="left:4px;top:4px;width:11px;height:11px;border:1px solid #fff;border-top-width:3px"></div></div><div class="xb" style="left:969px;top:313px;background:linear-gradient(135deg,#EC8660,#CC4820);border-color:#fff"><svg class="a" style="left:4px;top:4px;width:11px;height:11px"><path d="M1 1L10 10M10 1L1 10" stroke="#fff" stroke-width="2"/></svg></div><div class="a" style="left:361px;top:337px;width:631px;height:371px;background:#ECE9D8;border-top:1px solid #fff"></div>
<div class="tb" style="left:365px;top:341px;width:25px;height:25px"><svg style="left:4px;top:4px" viewBox="0 0 16 16"><rect x="0" y="3" width="16" height="12" fill="#fff"/><rect x="1" y="1" width="14" height="1.3" fill="#00FFFF"/><path d="M2 4h1v1H2zM6 4h4v1H6zM13 4h1v1h-1zM2 13h1v1H2zM6 13h4v1H6zM13 13h1v1h-1z" fill="#008080"/><path d="M2 6h2.5v1.2H2z M0.8 7h1.4v4H0.8z M4 7h1.4v4H4z M2 10.8h2.5V12H2z M3 9.5h1v1.5H3z M5.3 11h1.2v1.2H5.3z M7 6h1.5v6H7z M8.5 6h2v1.2h-2z M8.5 8.4h2v1.2h-2z M8.5 10.8h2V12h-2z M10.3 7h1.2v1.5h-1.2z M10.3 9.5h1.2v1.5h-1.2z M12 6h1.5v6H12z M13.5 6h1.8v1.2h-1.8z M13.5 8.4h1.3v1.2h-1.3z M13.5 10.8h1.8V12h-1.8z" fill="#800000"/></svg></div>
<div class="tb" style="left:390px;top:341px;width:25px;height:25px"><svg style="left:4px;top:4px" viewBox="0 0 16 16"><path d="M0.5 5.5 L3 0.5 L5.5 5.5 M1.5 3.8h3" fill="none" stroke="#A8A498" stroke-width="1.6"/><path d="M11.5 10.5h4 L11.5 15 h4" fill="none" stroke="#A8A498" stroke-width="1.5"/><path d="M9 2.5 H13.5 Q15.5 2.5 15.5 4.5 Q15.5 6.5 13.5 6.5 H3.5 Q1.5 6.5 1.5 8.8 Q1.5 11 3.5 11 H8" fill="none" stroke="#A8A498" stroke-width="1.2"/><path d="M7 2.5 L10 0 V5z M10.5 11 L7.5 8.5 V13.5z" fill="#A8A498"/></svg></div>
<div class="tb" style="left:415px;top:341px;width:25px;height:25px"><svg style="left:4px;top:4px" viewBox="0 0 16 16"><path d="M4 0.5 H12.5 L8.5 4.5 H10.5 L6 9 H8 L2 15.8 L3.8 10 H1.5 L4 6 H1.5z" fill="none" stroke="#A8A498" stroke-width="1"/></svg></div>
<div class="tb" style="left:445px;top:341px;width:25px;height:25px"><svg style="left:4px;top:4px" viewBox="0 0 16 16"><rect x="0" y="6" width="1.5" height="6" fill="#00D0E0"/><path d="M1.5 6.5 H4 L6 4.5 H12.5 V6 H9 L10 7 H12 V8.5 H10 V9.5 H9 V11 H8 V12 H1.5z" fill="#F8F040" stroke="#000" stroke-width="0.8"/><path d="M3 8h2M3 10h3" stroke="#fff" stroke-width="0.7"/><path d="M14.5 1v2M14.5 4v2M14.5 9v2M14.5 12v2" stroke="#000" stroke-width="1.5"/><rect x="13.8" y="6.5" width="1.5" height="2" fill="#FF0000"/></svg></div>
<div class="tb" style="left:470px;top:341px;width:25px;height:25px"><svg style="left:4px;top:4px" viewBox="0 0 16 16"><path d="M5.5 3h3v3h3v3h-3v3h-3v-3h-3V6h3z" fill="#000"/></svg></div>
<div class="tb" style="left:495px;top:341px;width:25px;height:25px"><svg style="left:4px;top:4px" viewBox="0 0 16 16"><path d="M2.5 8 L5.5 11.5 L12.5 3.5" fill="none" stroke="#fff" stroke-width="1.2" transform="translate(0.7,0.7)"/><path d="M2.5 8 L5.5 11.5 L12.5 3.5" fill="none" stroke="#A8A498" stroke-width="1.2"/></svg></div>
<div class="tb" style="left:520px;top:341px;width:25px;height:25px"><svg style="left:4px;top:4px" viewBox="0 0 16 16"><path d="M3.5 2.5 L11.5 10.5 M11.5 2.5 L3.5 10.5" fill="none" stroke="#fff" stroke-width="1.4" transform="translate(0.7,0.7)"/><path d="M3.5 2.5 L11.5 10.5 M11.5 2.5 L3.5 10.5" fill="none" stroke="#A8A498" stroke-width="1.2"/></svg></div>
<div class="tb" style="left:545px;top:341px;width:25px;height:25px"><svg style="left:4px;top:4px" viewBox="0 0 16 16"><path d="M4.5 12.5 Q2.5 8 5 5.5 Q8 3 11 5 L11.5 6" fill="none" stroke="#000" stroke-width="2.2"/><path d="M8.5 6 H14.5 L11.5 9.5z" fill="#000"/></svg></div>
<div class="tb" style="left:570px;top:341px;width:25px;height:25px"><svg style="left:4px;top:4px" viewBox="0 0 16 16"><rect x="2.5" y="6" width="10.5" height="3" fill="#000"/></svg></div>
<div class="tb" style="left:595px;top:341px;width:25px;height:25px"><svg style="left:4px;top:4px" viewBox="0 0 16 16"><rect x="3" y="4" width="2" height="7" fill="#000"/><path d="M5 7.5 L12.5 4 V11z" fill="#000"/></svg></div>
<div class="tb" style="left:620px;top:341px;width:25px;height:25px"><svg style="left:4px;top:4px" viewBox="0 0 16 16"><path d="M4 7.5 L11.5 4 V11z" fill="#000"/></svg></div>
<div class="tb" style="left:645px;top:341px;width:25px;height:25px"><svg style="left:4px;top:4px" viewBox="0 0 16 16"><path d="M12 7.5 L4.5 4 V11z" fill="#000"/></svg></div>
<div class="tb" style="left:670px;top:341px;width:25px;height:25px"><svg style="left:4px;top:4px" viewBox="0 0 16 16"><rect x="11" y="4" width="2" height="7" fill="#000"/><path d="M11 7.5 L3.5 4 V11z" fill="#000"/></svg></div>
<div class="tb" style="left:695px;top:341px;width:25px;height:25px"><svg style="left:4px;top:4px" viewBox="0 0 16 16"><path d="M0.5 2.5 L3 0 L7.5 4.5 L5 7z" fill="#000"/><path d="M1.8 4.8 L5.3 1.3 L6.5 2.5 L3 6z" fill="#FF0000"/><path d="M4.5 6.5 L7 4 L10 5 L12 8 L12 11 L10 12.5 L7.5 11.5 L4.5 8.5z" fill="#FFF000" stroke="#000" stroke-width="0.9"/><path d="M6 7 l1 1 M8 6 l1 1 M7 9 l1 1 M9 8 l1 1" stroke="#fff" stroke-width="0.8"/><path d="M8.5 9 L11 11.5" stroke="#000" stroke-width="0.8"/><rect x="11.5" y="1" width="2" height="12" fill="#E8E000" stroke="#000" stroke-width="0.7"/><rect x="11" y="0" width="3" height="1.5" fill="#FF0000"/><path d="M12.5 13 V15" stroke="#000"/><path d="M1.5 14.5 H10" stroke="#808090" stroke-width="1"/></svg></div>
<div class="tb" style="left:721px;top:341px;width:25px;height:25px"><svg style="left:4px;top:4px" viewBox="0 0 16 16"><path d="M4.5 4.5 V12 Q4.5 14.5 7.5 14.5 Q10.5 14.5 10.5 12 V3.5 Q10.5 1.5 8.5 1.5 Q6.5 1.5 6.5 3.5 V11.5 Q6.5 12.5 7.5 12.5 Q8.5 12.5 8.5 11.5 V5" fill="none" stroke="#FF0000" stroke-width="1"/></svg></div>
<div class="tb" style="left:835px;top:341px;width:25px;height:25px"><svg style="left:4px;top:4px" viewBox="0 0 16 16"><rect x="0.5" y="2.5" width="15" height="13" fill="#fff" stroke="#000"/><rect x="1" y="3" width="14" height="2" fill="#2020E0"/><rect x="2" y="3" width="1" height="1" fill="#fff"/><rect x="13" y="3" width="1" height="1" fill="#fff"/><path d="M1 7.5h14M1 10h14M1 12.5h14M4 5v10M7 5v10M10 5v10M13 5v10" stroke="#000" stroke-width="0.7"/></svg></div>
<div class="t " style="left:866px;top:347px;">Records:</div>
<div class="fld" style="left:913px;top:343px;width:44px;height:22px;"><div class="v" style="left:1px;top:4px">2962</div></div>
<div class="tb" style="left:962px;top:341px;width:25px;height:25px"><svg style="left:4px;top:4px" viewBox="0 0 16 16"><path d="M3.5 5.5 Q3.5 0.8 8.8 0.8 Q14 0.8 14 4.8 Q14 7.5 10.5 8.8 L10 11 H6.8 L7.3 7.5 Q10.3 6.5 10.3 4.8 Q10.3 3.5 8.8 3.5 Q7.3 3.5 7 5.5z" fill="#18B8C0" stroke="#002080" stroke-width="0.9"/><path d="M5 4 Q6 2 9 2" fill="none" stroke="#80F0F0"/><rect x="6.5" y="12.3" width="3.3" height="3" rx="1" fill="#18B8C0" stroke="#002080" stroke-width="0.9"/></svg></div>
<div class="a" style="left:361px;top:369px;width:631px;height:1px;background:#ACA899"></div>
<div class="a" style="left:361px;top:370px;width:631px;height:1px;background:#fff"></div>
<div class="a" style="left:363px;top:394px;width:627px;height:312px;border-top:1px solid #fff;border-left:1px solid #fff;border-right:1px solid #716F64;border-bottom:1px solid #716F64;box-shadow:inset -1px -1px 0 #ACA899"></div>
<div class="a" style="left:456px;top:376px;width:64px;height:18px;background:#ECE9D8;border-top:1px solid #fff;border-left:1px solid #fff;border-right:1px solid #716F64;border-radius:2px 2px 0 0;box-shadow:inset -1px 0 0 #ACA899"></div>
<div class="a" style="left:520px;top:376px;width:55px;height:18px;background:#ECE9D8;border-top:1px solid #fff;border-left:1px solid #fff;border-right:1px solid #716F64;border-radius:2px 2px 0 0;box-shadow:inset -1px 0 0 #ACA899"></div>
<div class="a" style="left:575px;top:376px;width:44px;height:18px;background:#ECE9D8;border-top:1px solid #fff;border-left:1px solid #fff;border-right:1px solid #716F64;border-radius:2px 2px 0 0;box-shadow:inset -1px 0 0 #ACA899"></div>
<div class="a" style="left:364px;top:373px;width:92px;height:22px;background:#ECE9D8;border-top:1px solid #fff;border-left:1px solid #fff;border-right:1px solid #716F64;border-radius:2px 2px 0 0;box-shadow:inset -1px 0 0 #ACA899"></div>
<div class="a" style="left:365px;top:394px;width:89px;height:1px;background:#ECE9D8"></div>
<div class="t " style="left:372px;top:377px;"><u>1</u> Serial Number</div>
<div class="t " style="left:460px;top:379px;"><u>2</u> Warranty</div>
<div class="t " style="left:526px;top:379px;"><u>3</u> History</div>
<div class="t " style="left:581px;top:379px;"><u>4</u> User</div>
<div class="a" style="left:370px;top:405px;width:612px;height:107px;border:1px solid #D0D0BF;box-shadow:inset 1px 1px 0 #fff,1px 1px 0 #fff"></div>
<div class="t bl" style="right:568px;top:414px;">Part ID</div>
<div class="fld" style="left:462px;top:409px;width:181px;height:21px;"><div class="v" style="left:1px;top:3px">7558X8S</div></div>
<div class="tb" style="left:645px;top:409px;width:23px;height:23px"><svg style="left:3px;top:3px;width:16px;height:16px" viewBox="0 0 16 16"><path d="M1.5 11.5 V14 Q1.5 15.5 3 15.5 H13 Q14.5 15.5 14.5 14 V6" fill="#A0A0A0" stroke="#000" stroke-width="1.1"/><path d="M2.5 2 H4 V0.8 H6.5 V1.5 H12.5 L13.5 2.5 V10.5 L12 12 H2.5z" fill="#fff" stroke="#000" stroke-width="1.1"/><path d="M4 3.8h2.5M8 3.8h2M5 6.2h5M3.5 8.8h2M7 8.8h2" stroke="#000" stroke-width="1"/><path d="M2 12.5 H12.5" stroke="#000"/><path d="M4 13.5 H10" stroke="#fff" stroke-width="1.2"/><path d="M11 11 l1 1 M12 10 l1 1" stroke="#808080" stroke-width="0.8"/><rect x="0" y="4.5" width="2.2" height="3.5" rx="1" fill="#FF0000" stroke="#000" stroke-width="0.6"/><rect x="13.4" y="4.5" width="2.2" height="3.5" rx="1" fill="#FF0000" stroke="#000" stroke-width="0.6"/></svg></div>
<div class="fld" style="left:692px;top:409px;width:285px;height:21px;"><div class="v" style="left:1px;top:3px">8X8S Assembly, RoHS Compliant</div></div>
<div class="t " style="right:568px;top:439px;">Part Type</div>
<div class="a" style="left:462px;top:435px;width:156px;height:20px;background:#fff"></div><div class="fld" style="left:462px;top:435px;width:156px;height:20px;"><div class="v" style="left:3px;top:3px">M - MAKE</div></div><div class="tb" style="left:599px;top:437px;width:17px;height:16px"><svg style="left:3px;top:5px;width:9px;height:5px" viewBox="0 0 9 5"><path d="M0 0h9L4.5 5z" fill="#000"/></svg></div>
<div class="t " style="right:339px;top:439px;">Part Status</div>
<div class="a" style="left:692px;top:435px;width:154px;height:20px;background:#fff"></div><div class="fld" style="left:692px;top:435px;width:154px;height:20px;"><div class="v" style="left:3px;top:3px">A - ACTIVE</div></div><div class="tb" style="left:827px;top:437px;width:17px;height:16px"><svg style="left:3px;top:5px;width:9px;height:5px" viewBox="0 0 9 5"><path d="M0 0h9L4.5 5z" fill="#000"/></svg></div>
<div class="t bl" style="right:568px;top:463px;">Serial Number</div>
<div class="fld" style="left:462px;top:458px;width:131px;height:21px;"><div class="v" style="left:1px;top:3px">7558-3005</div></div>
<div class="t bl" style="right:338px;top:463px;">Lot ID</div>
<div class="fld" style="left:692px;top:458px;width:130px;height:21px;"></div>
<div class="tb" style="left:825px;top:458px;width:23px;height:23px"><svg style="left:3px;top:3px;width:16px;height:16px" viewBox="0 0 16 16"><path d="M1.5 11.5 V14 Q1.5 15.5 3 15.5 H13 Q14.5 15.5 14.5 14 V6" fill="#A0A0A0" stroke="#000" stroke-width="1.1"/><path d="M2.5 2 H4 V0.8 H6.5 V1.5 H12.5 L13.5 2.5 V10.5 L12 12 H2.5z" fill="#fff" stroke="#000" stroke-width="1.1"/><path d="M4 3.8h2.5M8 3.8h2M5 6.2h5M3.5 8.8h2M7 8.8h2" stroke="#000" stroke-width="1"/><path d="M2 12.5 H12.5" stroke="#000"/><path d="M4 13.5 H10" stroke="#fff" stroke-width="1.2"/><path d="M11 11 l1 1 M12 10 l1 1" stroke="#808080" stroke-width="0.8"/><rect x="0" y="4.5" width="2.2" height="3.5" rx="1" fill="#FF0000" stroke="#000" stroke-width="0.6"/><rect x="13.4" y="4.5" width="2.2" height="3.5" rx="1" fill="#FF0000" stroke="#000" stroke-width="0.6"/></svg></div>
<div class="t " style="right:568px;top:489px;">Ship To Cust</div>
<div class="fld w" style="left:462px;top:484px;width:81px;height:21px;"><div class="v" style="left:1px;top:3px">LEO001|</div></div>
<div class="tb" style="left:546px;top:484px;width:23px;height:23px"><svg style="left:3px;top:3px;width:16px;height:16px" viewBox="0 0 16 16"><path d="M1.5 11.5 V14 Q1.5 15.5 3 15.5 H13 Q14.5 15.5 14.5 14 V6" fill="#A0A0A0" stroke="#000" stroke-width="1.1"/><path d="M2.5 2 H4 V0.8 H6.5 V1.5 H12.5 L13.5 2.5 V10.5 L12 12 H2.5z" fill="#fff" stroke="#000" stroke-width="1.1"/><path d="M4 3.8h2.5M8 3.8h2M5 6.2h5M3.5 8.8h2M7 8.8h2" stroke="#000" stroke-width="1"/><path d="M2 12.5 H12.5" stroke="#000"/><path d="M4 13.5 H10" stroke="#fff" stroke-width="1.2"/><path d="M11 11 l1 1 M12 10 l1 1" stroke="#808080" stroke-width="0.8"/><rect x="0" y="4.5" width="2.2" height="3.5" rx="1" fill="#FF0000" stroke="#000" stroke-width="0.6"/><rect x="13.4" y="4.5" width="2.2" height="3.5" rx="1" fill="#FF0000" stroke="#000" stroke-width="0.6"/></svg></div>
<div class="t " style="right:339px;top:489px;">SN Status</div>
<div class="a" style="left:692px;top:486px;width:154px;height:19px;background:#fff"></div><div class="fld w" style="left:692px;top:486px;width:154px;height:19px;"><div class="v" style="left:3px;top:2px">S - SHIPPED</div></div><div class="tb" style="left:827px;top:488px;width:17px;height:15px"><svg style="left:3px;top:4px;width:9px;height:5px" viewBox="0 0 9 5"><path d="M0 0h9L4.5 5z" fill="#000"/></svg></div>
<div class="t " style="right:568px;top:521px;">Stores Code</div>
<div class="fld" style="left:462px;top:517px;width:26px;height:21px;"></div>
<div class="tb" style="left:491px;top:517px;width:23px;height:23px"><svg style="left:3px;top:3px;width:16px;height:16px" viewBox="0 0 16 16"><path d="M1.5 11.5 V14 Q1.5 15.5 3 15.5 H13 Q14.5 15.5 14.5 14 V6" fill="#A0A0A0" stroke="#000" stroke-width="1.1"/><path d="M2.5 2 H4 V0.8 H6.5 V1.5 H12.5 L13.5 2.5 V10.5 L12 12 H2.5z" fill="#fff" stroke="#000" stroke-width="1.1"/><path d="M4 3.8h2.5M8 3.8h2M5 6.2h5M3.5 8.8h2M7 8.8h2" stroke="#000" stroke-width="1"/><path d="M2 12.5 H12.5" stroke="#000"/><path d="M4 13.5 H10" stroke="#fff" stroke-width="1.2"/><path d="M11 11 l1 1 M12 10 l1 1" stroke="#808080" stroke-width="0.8"/><rect x="0" y="4.5" width="2.2" height="3.5" rx="1" fill="#FF0000" stroke="#000" stroke-width="0.6"/><rect x="13.4" y="4.5" width="2.2" height="3.5" rx="1" fill="#FF0000" stroke="#000" stroke-width="0.6"/></svg></div>
<div class="t " style="right:379px;top:521px;">Stock Location</div>
<div class="fld" style="left:650px;top:517px;width:131px;height:21px;"></div>
<div class="tb" style="left:783px;top:517px;width:23px;height:23px"><svg style="left:3px;top:3px;width:16px;height:16px" viewBox="0 0 16 16"><path d="M1.5 11.5 V14 Q1.5 15.5 3 15.5 H13 Q14.5 15.5 14.5 14 V6" fill="#E0DED4" stroke="#A8A498" stroke-width="1.1"/><path d="M2.5 2 H4 V0.8 H6.5 V1.5 H12.5 L13.5 2.5 V10.5 L12 12 H2.5z" fill="#F4F2EA" stroke="#A8A498" stroke-width="1.1"/><path d="M4 3.8h2.5M8 3.8h2M5 6.2h5M3.5 8.8h2M7 8.8h2" stroke="#A8A498" stroke-width="1"/><rect x="0" y="4.5" width="2.2" height="3.5" rx="1" fill="#D8D6CC" stroke="#A8A498" stroke-width="0.6"/><rect x="13.4" y="4.5" width="2.2" height="3.5" rx="1" fill="#D8D6CC" stroke="#A8A498" stroke-width="0.6"/></svg></div>
<div class="t " style="right:568px;top:548px;">From Stores</div>
<div class="fld" style="left:462px;top:544px;width:26px;height:21px;"><div class="v" style="left:1px;top:3px">FG</div></div>
<div class="tb" style="left:491px;top:544px;width:23px;height:23px"><svg style="left:3px;top:3px;width:16px;height:16px" viewBox="0 0 16 16"><path d="M1.5 11.5 V14 Q1.5 15.5 3 15.5 H13 Q14.5 15.5 14.5 14 V6" fill="#A0A0A0" stroke="#000" stroke-width="1.1"/><path d="M2.5 2 H4 V0.8 H6.5 V1.5 H12.5 L13.5 2.5 V10.5 L12 12 H2.5z" fill="#fff" stroke="#000" stroke-width="1.1"/><path d="M4 3.8h2.5M8 3.8h2M5 6.2h5M3.5 8.8h2M7 8.8h2" stroke="#000" stroke-width="1"/><path d="M2 12.5 H12.5" stroke="#000"/><path d="M4 13.5 H10" stroke="#fff" stroke-width="1.2"/><path d="M11 11 l1 1 M12 10 l1 1" stroke="#808080" stroke-width="0.8"/><rect x="0" y="4.5" width="2.2" height="3.5" rx="1" fill="#FF0000" stroke="#000" stroke-width="0.6"/><rect x="13.4" y="4.5" width="2.2" height="3.5" rx="1" fill="#FF0000" stroke="#000" stroke-width="0.6"/></svg></div>
<div class="t " style="right:379px;top:548px;">From Location</div>
<div class="fld" style="left:650px;top:544px;width:131px;height:21px;"><div class="v" style="left:1px;top:3px">SHELF 5</div></div>
<div class="t " style="right:568px;top:576px;">SO ID</div>
<div class="fld w" style="left:462px;top:571px;width:81px;height:22px;"><div class="v" style="left:1px;top:4px">100836</div></div>
<div class="tb" style="left:546px;top:571px;width:23px;height:23px"><svg style="left:3px;top:3px;width:16px;height:16px" viewBox="0 0 16 16"><path d="M1.5 11.5 V14 Q1.5 15.5 3 15.5 H13 Q14.5 15.5 14.5 14 V6" fill="#A0A0A0" stroke="#000" stroke-width="1.1"/><path d="M2.5 2 H4 V0.8 H6.5 V1.5 H12.5 L13.5 2.5 V10.5 L12 12 H2.5z" fill="#fff" stroke="#000" stroke-width="1.1"/><path d="M4 3.8h2.5M8 3.8h2M5 6.2h5M3.5 8.8h2M7 8.8h2" stroke="#000" stroke-width="1"/><path d="M2 12.5 H12.5" stroke="#000"/><path d="M4 13.5 H10" stroke="#fff" stroke-width="1.2"/><path d="M11 11 l1 1 M12 10 l1 1" stroke="#808080" stroke-width="0.8"/><rect x="0" y="4.5" width="2.2" height="3.5" rx="1" fill="#FF0000" stroke="#000" stroke-width="0.6"/><rect x="13.4" y="4.5" width="2.2" height="3.5" rx="1" fill="#FF0000" stroke="#000" stroke-width="0.6"/></svg></div>
<div class="t " style="right:379px;top:576px;">SO Line No.</div>
<div class="fld w" style="left:650px;top:571px;width:50px;height:22px;"><div class="v" style="right:2px;top:4px">2.00</div></div>
<div class="tb" style="left:702px;top:571px;width:23px;height:23px"><svg style="left:3px;top:3px;width:16px;height:16px" viewBox="0 0 16 16"><path d="M1.5 11.5 V14 Q1.5 15.5 3 15.5 H13 Q14.5 15.5 14.5 14 V6" fill="#A0A0A0" stroke="#000" stroke-width="1.1"/><path d="M2.5 2 H4 V0.8 H6.5 V1.5 H12.5 L13.5 2.5 V10.5 L12 12 H2.5z" fill="#fff" stroke="#000" stroke-width="1.1"/><path d="M4 3.8h2.5M8 3.8h2M5 6.2h5M3.5 8.8h2M7 8.8h2" stroke="#000" stroke-width="1"/><path d="M2 12.5 H12.5" stroke="#000"/><path d="M4 13.5 H10" stroke="#fff" stroke-width="1.2"/><path d="M11 11 l1 1 M12 10 l1 1" stroke="#808080" stroke-width="0.8"/><rect x="0" y="4.5" width="2.2" height="3.5" rx="1" fill="#FF0000" stroke="#000" stroke-width="0.6"/><rect x="13.4" y="4.5" width="2.2" height="3.5" rx="1" fill="#FF0000" stroke="#000" stroke-width="0.6"/></svg></div>
<div class="t " style="right:129px;top:576px;">Shipment No.</div>
<div class="fld w" style="left:900px;top:571px;width:26px;height:22px;"><div class="v" style="right:4px;top:4px">1</div></div>
<div class="t " style="right:568px;top:602px;">Sold To Customer</div>
<div class="fld w" style="left:462px;top:598px;width:81px;height:21px;"><div class="v" style="left:1px;top:3px">LEO001</div></div>
<div class="tb" style="left:546px;top:598px;width:23px;height:23px"><svg style="left:3px;top:3px;width:16px;height:16px" viewBox="0 0 16 16"><path d="M1.5 11.5 V14 Q1.5 15.5 3 15.5 H13 Q14.5 15.5 14.5 14 V6" fill="#A0A0A0" stroke="#000" stroke-width="1.1"/><path d="M2.5 2 H4 V0.8 H6.5 V1.5 H12.5 L13.5 2.5 V10.5 L12 12 H2.5z" fill="#fff" stroke="#000" stroke-width="1.1"/><path d="M4 3.8h2.5M8 3.8h2M5 6.2h5M3.5 8.8h2M7 8.8h2" stroke="#000" stroke-width="1"/><path d="M2 12.5 H12.5" stroke="#000"/><path d="M4 13.5 H10" stroke="#fff" stroke-width="1.2"/><path d="M11 11 l1 1 M12 10 l1 1" stroke="#808080" stroke-width="0.8"/><rect x="0" y="4.5" width="2.2" height="3.5" rx="1" fill="#FF0000" stroke="#000" stroke-width="0.6"/><rect x="13.4" y="4.5" width="2.2" height="3.5" rx="1" fill="#FF0000" stroke="#000" stroke-width="0.6"/></svg></div>
<div class="t " style="right:379px;top:602px;">Bill To Cust</div>
<div class="fld w" style="left:650px;top:598px;width:80px;height:21px;"><div class="v" style="left:1px;top:3px">LEO001</div></div>
<div class="tb" style="left:733px;top:598px;width:23px;height:23px"><svg style="left:3px;top:3px;width:16px;height:16px" viewBox="0 0 16 16"><path d="M1.5 11.5 V14 Q1.5 15.5 3 15.5 H13 Q14.5 15.5 14.5 14 V6" fill="#A0A0A0" stroke="#000" stroke-width="1.1"/><path d="M2.5 2 H4 V0.8 H6.5 V1.5 H12.5 L13.5 2.5 V10.5 L12 12 H2.5z" fill="#fff" stroke="#000" stroke-width="1.1"/><path d="M4 3.8h2.5M8 3.8h2M5 6.2h5M3.5 8.8h2M7 8.8h2" stroke="#000" stroke-width="1"/><path d="M2 12.5 H12.5" stroke="#000"/><path d="M4 13.5 H10" stroke="#fff" stroke-width="1.2"/><path d="M11 11 l1 1 M12 10 l1 1" stroke="#808080" stroke-width="0.8"/><rect x="0" y="4.5" width="2.2" height="3.5" rx="1" fill="#FF0000" stroke="#000" stroke-width="0.6"/><rect x="13.4" y="4.5" width="2.2" height="3.5" rx="1" fill="#FF0000" stroke="#000" stroke-width="0.6"/></svg></div>
<div class="t " style="right:568px;top:628px;">Shipped Date</div>
<div class="fld w" style="left:462px;top:625px;width:75px;height:21px;"><div class="v" style="left:1px;top:3px">3/3/2008</div></div>
<div class="t " style="right:379px;top:628px;">Ship Type</div>
<div class="a" style="left:650px;top:625px;width:155px;height:20px;background:#fff"></div><div class="fld w" style="left:650px;top:625px;width:155px;height:20px;"><div class="v" style="left:3px;top:3px">S - FROM STOCK</div></div><div class="tb" style="left:786px;top:627px;width:17px;height:16px"><svg style="left:3px;top:5px;width:9px;height:5px" viewBox="0 0 9 5"><path d="M0 0h9L4.5 5z" fill="#000"/></svg></div>
<div class="t " style="right:129px;top:630px;">Returned Date</div>
<div class="fld w" style="left:900px;top:625px;width:74px;height:22px;"></div>
<div class="t " style="right:568px;top:657px;">Date Scrapped</div>
<div class="fld w" style="left:462px;top:653px;width:75px;height:21px;"></div>
<div class="t " style="right:379px;top:657px;">Date Consigned</div>
<div class="fld" style="left:650px;top:653px;width:74px;height:21px;"></div>
<div class="t " style="right:203px;top:657px;">Return Reason</div>
<div class="a" style="left:827px;top:653px;width:155px;height:20px;background:#fff"></div><div class="fld w" style="left:827px;top:653px;width:155px;height:20px;"></div><div class="tb" style="left:963px;top:655px;width:17px;height:16px"><svg style="left:3px;top:5px;width:9px;height:5px" viewBox="0 0 9 5"><path d="M0 0h9L4.5 5z" fill="#000"/></svg></div>
<div class="a" style="left:0;top:739px;width:1026px;height:31px;background:linear-gradient(to bottom,#3168D5 0px,#4A8EF6 1px,#3D7DEF 3px,#245EDC 5px,#2459DA 20px,#2355D6 27px,#1941A5 30px,#1A1A1A 30px)"></div>
<div class="a" style="left:0;top:739px;width:98px;height:30px;border-radius:0 12px 12px 0;background:linear-gradient(to bottom,#3C8F3C 0px,#5EB95E 2px,#3AA13A 5px,#34A034 15px,#2F9A2F 24px,#2A7F2A 28px,#1E5E1E 30px);box-shadow:inset -3px 0 3px rgba(0,0,0,0.25)"></div>
<svg class="a" style="left:11px;top:745px;width:19px;height:18px" viewBox="0 0 18 17"><path d="M3.5 2.5 Q6 1 9 2.2 L8 8 Q5 6.8 2.5 8z" fill="#E8501C" stroke="#201010" stroke-width="0.5"/><path d="M10 2.6 Q13 3.8 16.5 2.6 L15.5 8.3 Q12.5 9.5 9 8.3z" fill="#78C020" stroke="#102010" stroke-width="0.5"/><path d="M2.3 8.8 Q5 7.5 7.8 8.8 L6.8 14.5 Q4 13.3 1.2 14.5z" fill="#2878E8" stroke="#101030" stroke-width="0.5"/><path d="M8.8 9 Q12 10.2 15.3 9 L14.3 14.8 Q11 16 7.8 14.8z" fill="#F8C018" stroke="#302010" stroke-width="0.5"/><path d="M4 3.5 L7 3.5 M10.5 4 L14 4" stroke="#fff" stroke-width="0.6" opacity="0.5"/></svg>
<div class="a" style="left:36px;top:743px;white-space:nowrap;font-size:18px;line-height:24px;font-weight:bold;font-style:italic;color:#fff;text-shadow:1px 1px 1px #1A4A1A;letter-spacing:-0.1px">start</div>
<svg class="a" style="left:110px;top:746px;width:16px;height:16px" viewBox="0 0 16 16"><path d="M13.5 9.5 H5.5 Q5.8 12.5 8.8 12.5 Q10.8 12.5 12 11.2 L13.3 12.8 Q11.5 15 8.5 15 Q3 15 3 9.5 Q3 4 8.5 4 Q13.8 4 13.5 9.5z M5.6 8 H11 Q10.8 6 8.3 6 Q6 6 5.6 8z" fill="#1E90F0" stroke="#0A3A90" stroke-width="0.6"/><path d="M1.5 15.5 Q0 13 4 7 Q9 1 14.5 1.5 Q16.5 3 13 7.5" fill="none" stroke="#F0B020" stroke-width="1.4"/></svg>
<svg class="a" style="left:133px;top:746px;width:16px;height:16px" viewBox="0 0 17 17"><rect x="0.5" y="0.5" width="16" height="16" fill="#F8D890" stroke="#C08020"/><circle cx="8.5" cy="8.5" r="5.5" fill="#FFF6D8" stroke="#C08020" stroke-width="1.2"/><path d="M8.5 5v4h3" fill="none" stroke="#A06010" stroke-width="1.2"/></svg>
<svg class="a" style="left:155px;top:746px;width:16px;height:16px" viewBox="0 0 16 16"><rect x="1" y="2" width="13" height="13" rx="2" fill="#E8F0FF" stroke="#1A50C8" stroke-width="1.3"/><rect x="2.5" y="4" width="10" height="9" fill="#fff"/><path d="M4 12 L11 5 L13 7 L6 14z" fill="#4080E0" stroke="#103070" stroke-width="0.8"/><path d="M5 5h4M5 7h3" stroke="#1A50C8"/><circle cx="14.5" cy="3.5" r="1.5" fill="#E04020"/></svg>
<svg class="a" style="left:179px;top:746px;width:16px;height:16px" viewBox="0 0 16 16"><circle cx="8.5" cy="8.5" r="7" fill="#3A5AB0"/><path d="M14 6 Q15 11 11 14 Q7 16.5 3 13 Q0.5 10 1.5 6 Q3 9 5 9 Q3.5 7 5 4 Q6 6.5 8 6 Q9 3 7 1.5 Q12 1.5 14 6z" fill="#E87010" stroke="#A04000" stroke-width="0.5"/><path d="M4 12 Q7 14.5 10.5 13" fill="none" stroke="#F8C040" stroke-width="1"/></svg>
<div class="a" style="left:226px;top:743px;width:158px;height:23px;border-radius:3px;background:linear-gradient(to bottom,#4C92F8,#3C81F3 20%,#3A7EF0 80%,#2E6EE0);box-shadow:inset 1px 1px 0 #5CA0FF"></div>
<svg class="a" style="left:235px;top:747px;width:16px;height:16px" viewBox="0 0 17 17"><rect x="0.5" y="0.5" width="16" height="16" fill="#F8D890" stroke="#C08020"/><circle cx="8.5" cy="8.5" r="5.5" fill="#FFF6D8" stroke="#C08020" stroke-width="1.2"/><path d="M8.5 5v4h3" fill="none" stroke="#A06010" stroke-width="1.2"/></svg>
<div class="t" style="left:254px;top:748px;color:#fff">Inbox - Microsoft Out...</div>
<div class="a" style="left:385px;top:743px;width:159px;height:23px;border-radius:3px;background:#1E49B5;box-shadow:inset 1px 1px 0 #10308A,inset 2px 2px 1px #1A3E9E"></div>
<svg class="a" style="left:396px;top:747px;width:16px;height:16px" viewBox="0 0 16 16"><rect x="0.5" y="0.5" width="15" height="15" fill="#fff" stroke="#6b6b5e"/><rect x="10" y="2" width="3" height="3" fill="#F0A000"/><rect x="6" y="6" width="3" height="3" fill="#8DA28D"/><rect x="10" y="6" width="3" height="3" fill="#8DA28D"/><rect x="2" y="10" width="3" height="3" fill="#4E6E6E"/><rect x="6" y="10" width="3" height="3" fill="#4E6E6E"/><rect x="10" y="10" width="3" height="3" fill="#4E6E6E"/></svg>
<div class="t" style="left:416px;top:748px;color:#fff">Expandable</div>
<div class="a" style="left:860px;top:739px;width:165px;height:30px;background:linear-gradient(to bottom,#1290E8 0px,#19A8F5 2px,#0F9BEF 6px,#0E95EC 22px,#0A80DC 28px,#0866C8 30px);box-shadow:inset 1px 0 0 #10285A,inset 0 1px 0 #0A4EC0"></div>
<div class="a" style="left:851px;top:745px;width:19px;height:19px;border-radius:50%;background:linear-gradient(135deg,#7ACCFF,#2890F0 60%,#1A70E0);border:1px solid;border-color:#1A2E60 #C8D0E8 #C8D0E8 #1A2E60"><svg class="a" style="left:5px;top:4px;width:7px;height:9px" viewBox="0 0 7 9"><path d="M5.5 1 L2 4.5 L5.5 8" fill="none" stroke="#fff" stroke-width="2"/></svg></div>
<svg class="a" style="left:872px;top:746px;width:16px;height:16px" viewBox="0 0 16 16"><rect x="0.5" y="0.5" width="14" height="14" fill="#F0F0F0" stroke="#C0C0C0"/><circle cx="7.5" cy="7.5" r="4" fill="none" stroke="#888" stroke-dasharray="1 1.5"/></svg>
<svg class="a" style="left:889px;top:746px;width:16px;height:16px" viewBox="0 0 16 16"><rect x="6" y="0.5" width="8" height="7" fill="#202850" stroke="#8088C0" stroke-width="1"/><rect x="7" y="1.5" width="6" height="5" fill="#283070"/><rect x="0.5" y="3.5" width="8" height="7" fill="#202850" stroke="#8088C0" stroke-width="1"/><rect x="1.5" y="4.5" width="6" height="5" fill="#283070"/><ellipse cx="4.5" cy="13.5" rx="4" ry="2" fill="#D0D8F8"/><ellipse cx="10" cy="10" rx="3" ry="1.5" fill="#C0C8F0"/></svg>
<svg class="a" style="left:907px;top:746px;width:16px;height:16px" viewBox="0 0 16 16"><rect x="0.5" y="2.5" width="8" height="7" fill="#202850" stroke="#8088C0" stroke-width="1"/><rect x="1.5" y="3.5" width="6" height="5" fill="#283070"/><ellipse cx="4.5" cy="12.5" rx="4" ry="2" fill="#D0D8F8"/><path d="M10 3 Q11.5 5.5 10 8 M12 1.5 Q14.5 5.5 12 9.5 M14 0 Q17.5 5.5 14 11" fill="none" stroke="#C8C0A8" stroke-width="1"/></svg>
<svg class="a" style="left:925px;top:746px;width:16px;height:16px" viewBox="0 0 16 16"><rect x="1" y="11" width="2.5" height="4" fill="#00E000" stroke="#000" stroke-width="0.6"/><rect x="5" y="8" width="2.5" height="7" fill="#00E000" stroke="#000" stroke-width="0.6"/><rect x="9" y="4.5" width="2.5" height="10.5" fill="#00E000" stroke="#000" stroke-width="0.6"/><rect x="13" y="1" width="2.5" height="14" fill="#00E000" stroke="#000" stroke-width="0.6"/></svg>
<svg class="a" style="left:943px;top:746px;width:16px;height:16px" viewBox="0 0 16 16"><rect x="0.5" y="0.5" width="15" height="15" fill="#B8B8B8" stroke="#707080"/><rect x="1.5" y="1.5" width="13" height="9" fill="#C8C8C8" stroke="#203080"/><rect x="1.5" y="11.5" width="13" height="3" fill="#203080"/><rect x="3" y="11.5" width="4" height="1.5" fill="#fff"/><rect x="9" y="11.5" width="4" height="1.5" fill="#fff"/></svg>
<div class="t" style="left:966px;top:748px;color:#fff">10:24 AM</div>
<div class="a" style="left:1025px;top:739px;width:1px;height:31px;background:#1A1A1A"></div>
</body></html>
